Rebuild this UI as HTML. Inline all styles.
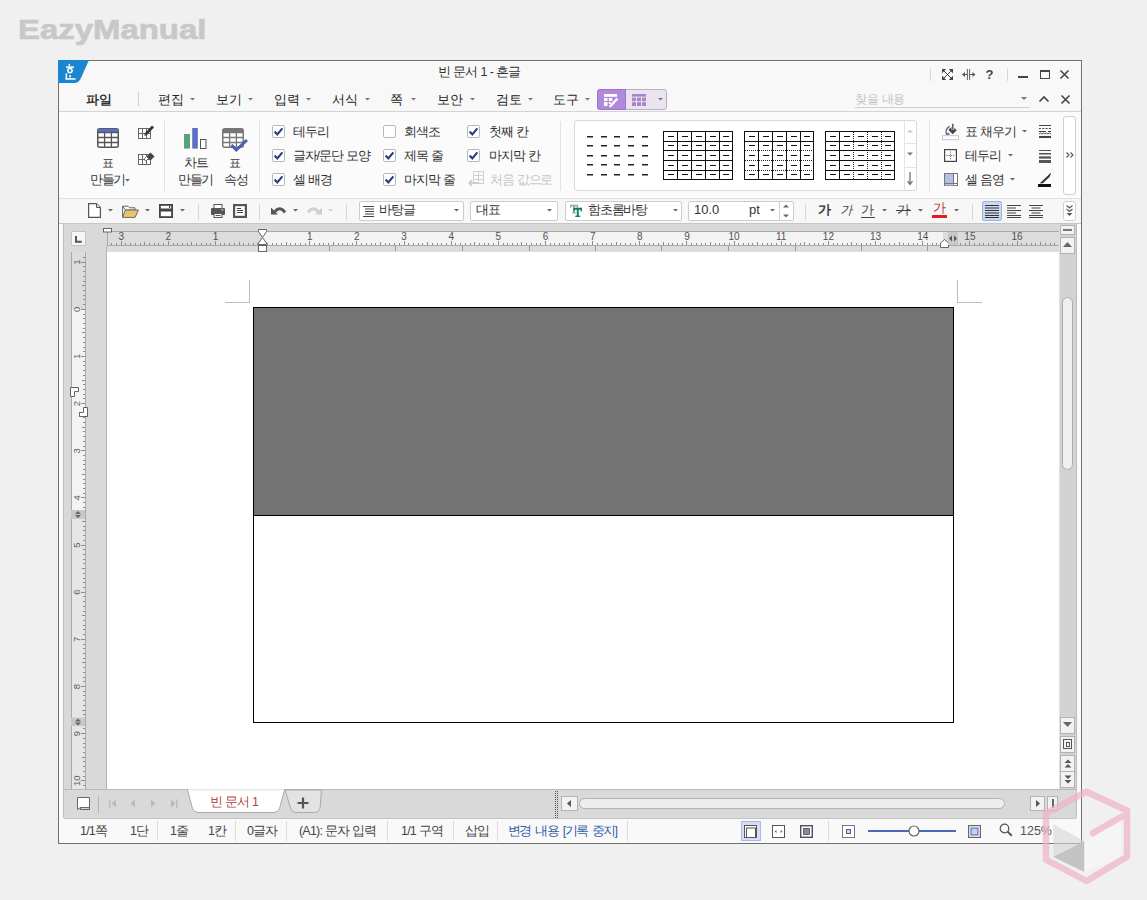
<!DOCTYPE html>
<html><head><meta charset="utf-8">
<style>
*{margin:0;padding:0;box-sizing:border-box}
html,body{width:1147px;height:900px;overflow:hidden;background:#f0f0f0;font-family:"Liberation Sans",sans-serif;color:#333}
.a{position:absolute}
.t{position:absolute;white-space:nowrap;font-size:12px;line-height:14px;color:#333;letter-spacing:-1.2px;word-spacing:1px}
svg{overflow:visible}
</style></head><body>

<div class="t" style="left:18px;top:14px;font-size:28px;line-height:32px;font-weight:bold;color:#c8c8c8;letter-spacing:0;word-spacing:0;-webkit-text-stroke:0.7px #c8c8c8;transform:scaleX(1.175);transform-origin:0 0">EazyManual</div>
<div class="a" style="left:58px;top:60px;width:1024px;height:784px;border:1px solid #707070;background:#f9f9f9"></div>
<div class="a" style="left:59px;top:61px;width:1022px;height:50px;background:#f8f8f8"></div>
<div class="a" style="left:59px;top:111px;width:1022px;height:1px;background:#d4d4d4"></div>
<div class="a" style="left:59px;top:112px;width:1022px;height:86px;background:#fbfbfb"></div>
<div class="a" style="left:59px;top:198px;width:1022px;height:1px;background:#e0e0e0"></div>
<div class="a" style="left:59px;top:199px;width:1022px;height:24px;background:#f7f7f7"></div>
<div class="a" style="left:59px;top:223px;width:1022px;height:1px;background:#c6c6c6"></div>
<svg class="a" style="left:58px;top:60px;" width="31" height="24" viewBox="0 0 31 24"><path d="M0 0H31L23 18Q21 23 16 23H0Z" fill="#1b86cf"/></svg>
<svg class="a" style="left:65px;top:63px;" width="12" height="18" viewBox="0 0 12 18"><g fill="#fff"><rect x="3.6" y="0.8" width="1.5" height="2.6"/><rect x="1" y="3.4" width="8" height="1.5"/><rect x="0.6" y="10.3" width="1.5" height="6"/><rect x="0.6" y="15.2" width="10" height="1.5"/><rect x="4.3" y="12" width="1.5" height="2.5"/></g><circle cx="5" cy="7.6" r="2.1" fill="none" stroke="#fff" stroke-width="1.5"/></svg>
<div class="t" style="left:438px;top:65px;font-size:12.5px;color:#333;letter-spacing:-1.1px;word-spacing:1px">빈 문서 1 - 흔글</div>
<div class="a" style="left:930px;top:68px;width:1px;height:13px;background:#d8d8d8"></div>
<div class="a" style="left:1007px;top:68px;width:1px;height:13px;background:#d8d8d8"></div>
<svg class="a" style="left:942px;top:69px;" width="11" height="11" viewBox="0 0 11 11"><path d="M1.5 1.5L9.5 9.5M9.5 1.5L1.5 9.5" stroke="#444" stroke-width="1"/><path d="M0 0H4.2L0 4.2Z M11 0H6.8L11 4.2Z M0 11H4.2L0 6.8Z M11 11H6.8L11 6.8Z" fill="#444"/></svg>
<svg class="a" style="left:962px;top:69px;" width="14" height="11" viewBox="0 0 14 11"><path d="M5.4 0V11M7.6 0V11" stroke="#555" stroke-width="0.9"/><path d="M1 5.5H5M8 5.5H12" stroke="#555" stroke-width="1.2"/><path d="M0 5.5L3 3V8Z M13.5 5.5L10.5 3V8Z" fill="#555"/></svg>
<div class="t" style="left:985.5px;top:68px;font-size:13px;font-weight:bold;color:#444;letter-spacing:0">?</div>
<div class="a" style="left:1018px;top:76px;width:10px;height:2px;background:#444"></div>
<div class="a" style="left:1040px;top:70px;width:10px;height:9px;border:1.5px solid #444;border-top-width:2.5px"></div>
<svg class="a" style="left:1060px;top:70px;" width="9" height="9" viewBox="0 0 9 9"><path d="M0.5 0.5L8.5 8.5M8.5 0.5L0.5 8.5" stroke="#444" stroke-width="1.6"/></svg>
<div class="t" style="left:86px;top:93px;font-size:12.5px;font-weight:bold;color:#333;letter-spacing:-0.5px">파일</div>
<div class="a" style="left:138px;top:92px;width:1px;height:14px;background:#d0d0d0"></div>
<div class="t" style="left:158px;top:93px;font-size:12.5px;color:#222;letter-spacing:-0.5px">편집</div>
<svg class="a" style="left:189.5px;top:98px;" width="5.0" height="4" viewBox="0 0 5.0 4"><path d="M0 0H5.0L2.5 2.5Z" fill="#777"/></svg>
<div class="t" style="left:216px;top:93px;font-size:12.5px;color:#222;letter-spacing:-0.5px">보기</div>
<svg class="a" style="left:247.5px;top:98px;" width="5.0" height="4" viewBox="0 0 5.0 4"><path d="M0 0H5.0L2.5 2.5Z" fill="#777"/></svg>
<div class="t" style="left:274px;top:93px;font-size:12.5px;color:#222;letter-spacing:-0.5px">입력</div>
<svg class="a" style="left:305.5px;top:98px;" width="5.0" height="4" viewBox="0 0 5.0 4"><path d="M0 0H5.0L2.5 2.5Z" fill="#777"/></svg>
<div class="t" style="left:332px;top:93px;font-size:12.5px;color:#222;letter-spacing:-0.5px">서식</div>
<svg class="a" style="left:364.5px;top:98px;" width="5.0" height="4" viewBox="0 0 5.0 4"><path d="M0 0H5.0L2.5 2.5Z" fill="#777"/></svg>
<div class="t" style="left:390px;top:93px;font-size:12.5px;color:#222;letter-spacing:-0.5px">쪽</div>
<svg class="a" style="left:410.5px;top:98px;" width="5.0" height="4" viewBox="0 0 5.0 4"><path d="M0 0H5.0L2.5 2.5Z" fill="#777"/></svg>
<div class="t" style="left:437px;top:93px;font-size:12.5px;color:#222;letter-spacing:-0.5px">보안</div>
<svg class="a" style="left:469.5px;top:98px;" width="5.0" height="4" viewBox="0 0 5.0 4"><path d="M0 0H5.0L2.5 2.5Z" fill="#777"/></svg>
<div class="t" style="left:496px;top:93px;font-size:12.5px;color:#222;letter-spacing:-0.5px">검토</div>
<svg class="a" style="left:527.5px;top:98px;" width="5.0" height="4" viewBox="0 0 5.0 4"><path d="M0 0H5.0L2.5 2.5Z" fill="#777"/></svg>
<div class="t" style="left:553px;top:93px;font-size:12.5px;color:#222;letter-spacing:-0.5px">도구</div>
<svg class="a" style="left:584.5px;top:98px;" width="5.0" height="4" viewBox="0 0 5.0 4"><path d="M0 0H5.0L2.5 2.5Z" fill="#777"/></svg>
<div class="a" style="left:597px;top:89px;width:70px;height:21px;background:#ebe4f0;border:1px solid #b9b1c2;border-radius:3px"></div>
<div class="a" style="left:597px;top:89px;width:29px;height:21px;background:#b088dc;border:1px solid #9d73cf;border-radius:3px 0 0 3px"></div>
<svg class="a" style="left:604px;top:94px;" width="14" height="13" viewBox="0 0 14 13"><g fill="#fff"><rect x="0" y="0" width="13" height="2.8"/><rect x="0" y="4" width="3.5" height="3"/><rect x="4.8" y="4" width="3.5" height="3"/><rect x="0" y="8" width="3.5" height="4"/><rect x="4.8" y="8" width="2" height="2"/></g><path d="M6 12.5L13.5 4.5" stroke="#fff" stroke-width="2.4"/><path d="M5.5 13L7 11" stroke="#fff" stroke-width="1.5"/></svg>
<svg class="a" style="left:632px;top:94px;" width="14" height="12" viewBox="0 0 14 12"><g fill="#a986c9"><rect x="0" y="0" width="14" height="2.6"/><rect x="0" y="3.6" width="4" height="3.6"/><rect x="5" y="3.6" width="4" height="3.6"/><rect x="10" y="3.6" width="4" height="3.6"/><rect x="0" y="8.2" width="4" height="3.8"/><rect x="5" y="8.2" width="4" height="3.8"/><rect x="10" y="8.2" width="4" height="3.8"/></g></svg>
<svg class="a" style="left:657.5px;top:98px;" width="5.0" height="4" viewBox="0 0 5.0 4"><path d="M0 0H5.0L2.5 2.5Z" fill="#777"/></svg>
<div class="t" style="left:855px;top:92px;font-size:12px;color:#c4c4c4;letter-spacing:-0.5px">찾을 내용</div>
<div class="a" style="left:855px;top:107px;width:175px;height:1px;background:#cfcfcf"></div>
<svg class="a" style="left:1021px;top:97px;" width="6" height="4" viewBox="0 0 6 4"><path d="M0 0H6L3 3Z" fill="#777"/></svg>
<svg class="a" style="left:1039px;top:96px;" width="10" height="6" viewBox="0 0 10 6"><path d="M0.5 5.5L5 1L9.5 5.5" stroke="#444" stroke-width="1.6" fill="none"/></svg>
<svg class="a" style="left:1061px;top:95px;" width="9" height="9" viewBox="0 0 9 9"><path d="M0.5 0.5L8.5 8.5M8.5 0.5L0.5 8.5" stroke="#444" stroke-width="1.6"/></svg>
<!--RIBBON-->
<svg class="a" style="left:97px;top:128px;" width="22" height="20" viewBox="0 0 22 20"><rect x="0.75" y="0.75" width="20.5" height="18.5" rx="2" fill="#fff" stroke="#555" stroke-width="1.5"/><path d="M0.75 3Q0.75 0.75 3 0.75H19Q21.25 0.75 21.25 3V4.5H0.75Z" fill="#5b6fc2"/><path d="M0.75 4.5H21.25M0.75 9.5H21.25M0.75 14.5H21.25M7.6 4.5V19M14.4 4.5V19" stroke="#555" stroke-width="1.3" fill="none"/></svg>
<div class="t" style="left:102px;top:156px;font-size:12px;letter-spacing:0">표</div>
<div class="t" style="left:90px;top:173px;font-size:12.5px;letter-spacing:-1.3px">만들기</div>
<svg class="a" style="left:125.0px;top:179px;" width="5.0" height="4" viewBox="0 0 5.0 4"><path d="M0 0H5.0L2.5 2.5Z" fill="#666"/></svg>
<svg class="a" style="left:138px;top:124px;" width="17" height="16" viewBox="0 0 17 16"><rect x="0.5" y="4.5" width="12" height="10" fill="#fff" stroke="#666"/><path d="M0.5 9.5H12.5M4.5 4.5V14.5M8.5 4.5V14.5" stroke="#666"/><path d="M7 11L15 2.5" stroke="#333" stroke-width="2.6"/><path d="M6.5 12L7.3 10" stroke="#999" stroke-width="1"/></svg>
<svg class="a" style="left:138px;top:150px;" width="17" height="16" viewBox="0 0 17 16"><rect x="0.5" y="4.5" width="12" height="10" fill="#fff" stroke="#666"/><path d="M0.5 9.5H12.5M4.5 4.5V14.5M8.5 4.5V14.5" stroke="#666"/><path d="M8.5 6.5L12.5 2.5L16.5 6.5L12.5 10.5Z" fill="#444"/><path d="M8.5 6.5L6.5 8.5Q6 10.5 8 11L10.5 8.5Z" fill="#fff" stroke="#555" stroke-width="0.8"/></svg>
<div class="a" style="left:164px;top:121px;width:1px;height:70px;background:#e2e2e2"></div>
<svg class="a" style="left:184px;top:128px;" width="23" height="21" viewBox="0 0 23 21"><rect x="0" y="6" width="6" height="14.6" fill="#58a27a"/><rect x="8.2" y="0" width="5.6" height="20.6" fill="#5a6fc4"/><rect x="16.5" y="11.5" width="5.5" height="9" fill="#fff" stroke="#555" stroke-width="1"/></svg>
<div class="t" style="left:184px;top:156px;font-size:12.5px;letter-spacing:-1.3px">차트</div>
<div class="t" style="left:178px;top:173px;font-size:12.5px;letter-spacing:-1.3px">만들기</div>
<svg class="a" style="left:222px;top:128px;" width="26" height="23" viewBox="0 0 26 23"><rect x="0.75" y="0.75" width="20.5" height="18.5" rx="2" fill="#fff" stroke="#777" stroke-width="1.5"/><path d="M0.75 3Q0.75 0.75 3 0.75H19Q21.25 0.75 21.25 3V4.5H0.75Z" fill="#777"/><path d="M0.75 4.5H21.25M0.75 9.5H21.25M0.75 14.5H21.25M7.6 4.5V19M14.4 4.5V19" stroke="#777" stroke-width="1.3" fill="none"/><path d="M9.5 17L14.3 22L25 12" stroke="#4a5fb5" stroke-width="3" fill="none"/></svg>
<div class="t" style="left:229px;top:156px;font-size:12px;letter-spacing:0">표</div>
<div class="t" style="left:224px;top:173px;font-size:12.5px;letter-spacing:-1.3px">속성</div>
<div class="a" style="left:259px;top:121px;width:1px;height:70px;background:#e2e2e2"></div>
<svg class="a" style="left:272px;top:125px" width="13" height="13" viewBox="0 0 13 13"><rect x="0.5" y="0.5" width="12" height="12" rx="1.5" fill="#fff" stroke="#b8b8b8"/><path d="M2.6 6.6L5.3 9.4L10.4 3.4" stroke="#2b3a7c" stroke-width="2.1" fill="none"/></svg>
<div class="t" style="left:293px;top:125px;font-size:12.5px;letter-spacing:-1.2px">테두리</div>
<svg class="a" style="left:272px;top:149px" width="13" height="13" viewBox="0 0 13 13"><rect x="0.5" y="0.5" width="12" height="12" rx="1.5" fill="#fff" stroke="#b8b8b8"/><path d="M2.6 6.6L5.3 9.4L10.4 3.4" stroke="#2b3a7c" stroke-width="2.1" fill="none"/></svg>
<div class="t" style="left:293px;top:149px;font-size:12.5px;letter-spacing:-1.2px">글자/문단 모양</div>
<svg class="a" style="left:272px;top:173px" width="13" height="13" viewBox="0 0 13 13"><rect x="0.5" y="0.5" width="12" height="12" rx="1.5" fill="#fff" stroke="#b8b8b8"/><path d="M2.6 6.6L5.3 9.4L10.4 3.4" stroke="#2b3a7c" stroke-width="2.1" fill="none"/></svg>
<div class="t" style="left:293px;top:173px;font-size:12.5px;letter-spacing:-1.2px">셀 배경</div>
<svg class="a" style="left:383px;top:125px" width="13" height="13" viewBox="0 0 13 13"><rect x="0.5" y="0.5" width="12" height="12" rx="1.5" fill="#fff" stroke="#b8b8b8"/></svg>
<div class="t" style="left:404px;top:125px;font-size:12.5px;letter-spacing:-1.2px">회색조</div>
<svg class="a" style="left:383px;top:149px" width="13" height="13" viewBox="0 0 13 13"><rect x="0.5" y="0.5" width="12" height="12" rx="1.5" fill="#fff" stroke="#b8b8b8"/><path d="M2.6 6.6L5.3 9.4L10.4 3.4" stroke="#2b3a7c" stroke-width="2.1" fill="none"/></svg>
<div class="t" style="left:404px;top:149px;font-size:12.5px;letter-spacing:-1.2px">제목 줄</div>
<svg class="a" style="left:383px;top:173px" width="13" height="13" viewBox="0 0 13 13"><rect x="0.5" y="0.5" width="12" height="12" rx="1.5" fill="#fff" stroke="#b8b8b8"/><path d="M2.6 6.6L5.3 9.4L10.4 3.4" stroke="#2b3a7c" stroke-width="2.1" fill="none"/></svg>
<div class="t" style="left:404px;top:173px;font-size:12.5px;letter-spacing:-1.2px">마지막 줄</div>
<svg class="a" style="left:467px;top:125px" width="13" height="13" viewBox="0 0 13 13"><rect x="0.5" y="0.5" width="12" height="12" rx="1.5" fill="#fff" stroke="#b8b8b8"/><path d="M2.6 6.6L5.3 9.4L10.4 3.4" stroke="#2b3a7c" stroke-width="2.1" fill="none"/></svg>
<div class="t" style="left:489px;top:125px;font-size:12.5px;letter-spacing:-1.2px">첫째 칸</div>
<svg class="a" style="left:467px;top:149px" width="13" height="13" viewBox="0 0 13 13"><rect x="0.5" y="0.5" width="12" height="12" rx="1.5" fill="#fff" stroke="#b8b8b8"/><path d="M2.6 6.6L5.3 9.4L10.4 3.4" stroke="#2b3a7c" stroke-width="2.1" fill="none"/></svg>
<div class="t" style="left:489px;top:149px;font-size:12.5px;letter-spacing:-1.2px">마지막 칸</div>
<svg class="a" style="left:469px;top:171px;" width="16" height="18" viewBox="0 0 16 18"><g stroke="#d0d0d0" fill="none" stroke-width="1"><rect x="4.5" y="0.5" width="10" height="12"/><path d="M4.5 4.5H14.5M4.5 8.5H14.5M9.5 0.5V12.5"/></g><path d="M0 12H9M0 12L3 9M0 12L3 15" stroke="#c8c8c8" stroke-width="1.6" fill="none"/></svg>
<div class="t" style="left:490px;top:173px;font-size:12.5px;letter-spacing:-1.2px;color:#c6c6c6">처음 값으로</div>
<div class="a" style="left:560px;top:121px;width:1px;height:70px;background:#e2e2e2"></div>
<div class="a" style="left:574px;top:120px;width:343px;height:71px;background:#fff;border:1px solid #d9d9d9;border-radius:3px"></div>
<div class="a" style="left:904px;top:121px;width:1px;height:69px;background:#e4e4e4"></div>
<div class="a" style="left:905px;top:143px;width:11px;height:1px;background:#e4e4e4"></div>
<div class="a" style="left:905px;top:167px;width:11px;height:1px;background:#e4e4e4"></div>
<svg class="a" style="left:907px;top:129px;" width="6" height="4" viewBox="0 0 6 4"><path d="M0 3.5L3 0.5L6 3.5Z" fill="#c8c8c8"/></svg>
<svg class="a" style="left:907px;top:152px;" width="6" height="4" viewBox="0 0 6 4"><path d="M0 0.5L3 3.5L6 0.5Z" fill="#777"/></svg>
<svg class="a" style="left:907px;top:172px;" width="6" height="14" viewBox="0 0 6 14"><path d="M3 0V12M0.5 9L3 12.5L5.5 9" stroke="#666" stroke-width="1.2" fill="none"/></svg>
<svg class="a" style="left:574px;top:120px;" width="80" height="70" viewBox="0 0 80 70"><rect x="13" y="16" width="6" height="1.5" fill="#222"/><rect x="13" y="25" width="6" height="1.5" fill="#222"/><rect x="13" y="35" width="6" height="1.5" fill="#222"/><rect x="13" y="44" width="6" height="1.5" fill="#222"/><rect x="13" y="54" width="6" height="1.5" fill="#222"/><rect x="27" y="16" width="6" height="1.5" fill="#222"/><rect x="27" y="25" width="6" height="1.5" fill="#222"/><rect x="27" y="35" width="6" height="1.5" fill="#222"/><rect x="27" y="44" width="6" height="1.5" fill="#222"/><rect x="27" y="54" width="6" height="1.5" fill="#222"/><rect x="40" y="16" width="6" height="1.5" fill="#222"/><rect x="40" y="25" width="6" height="1.5" fill="#222"/><rect x="40" y="35" width="6" height="1.5" fill="#222"/><rect x="40" y="44" width="6" height="1.5" fill="#222"/><rect x="40" y="54" width="6" height="1.5" fill="#222"/><rect x="54" y="16" width="6" height="1.5" fill="#222"/><rect x="54" y="25" width="6" height="1.5" fill="#222"/><rect x="54" y="35" width="6" height="1.5" fill="#222"/><rect x="54" y="44" width="6" height="1.5" fill="#222"/><rect x="54" y="54" width="6" height="1.5" fill="#222"/><rect x="68" y="16" width="6" height="1.5" fill="#222"/><rect x="68" y="25" width="6" height="1.5" fill="#222"/><rect x="68" y="35" width="6" height="1.5" fill="#222"/><rect x="68" y="44" width="6" height="1.5" fill="#222"/><rect x="68" y="54" width="6" height="1.5" fill="#222"/></svg>
<svg class="a" style="left:663px;top:131px;" width="70" height="49" viewBox="0 0 70 49"><g shape-rendering="crispEdges"><rect x="0.5" y="0.5" width="69" height="48" fill="#fff" stroke="#111" stroke-width="1"/><rect x="14" y="0" width="1" height="49" fill="#111"/><rect x="28" y="0" width="1" height="49" fill="#111"/><rect x="42" y="0" width="1" height="49" fill="#111"/><rect x="56" y="0" width="1" height="49" fill="#111"/><rect x="0" y="10" width="70" height="1" fill="#111"/><rect x="0" y="19" width="70" height="1" fill="#111"/><rect x="0" y="29" width="70" height="1" fill="#111"/><rect x="0" y="39" width="70" height="1" fill="#111"/><rect x="5" y="5" width="6" height="1" fill="#111"/><rect x="5" y="14" width="6" height="1" fill="#111"/><rect x="5" y="24" width="6" height="1" fill="#111"/><rect x="5" y="34" width="6" height="1" fill="#111"/><rect x="5" y="43" width="6" height="1" fill="#111"/><rect x="19" y="5" width="6" height="1" fill="#111"/><rect x="19" y="14" width="6" height="1" fill="#111"/><rect x="19" y="24" width="6" height="1" fill="#111"/><rect x="19" y="34" width="6" height="1" fill="#111"/><rect x="19" y="43" width="6" height="1" fill="#111"/><rect x="33" y="5" width="6" height="1" fill="#111"/><rect x="33" y="14" width="6" height="1" fill="#111"/><rect x="33" y="24" width="6" height="1" fill="#111"/><rect x="33" y="34" width="6" height="1" fill="#111"/><rect x="33" y="43" width="6" height="1" fill="#111"/><rect x="47" y="5" width="6" height="1" fill="#111"/><rect x="47" y="14" width="6" height="1" fill="#111"/><rect x="47" y="24" width="6" height="1" fill="#111"/><rect x="47" y="34" width="6" height="1" fill="#111"/><rect x="47" y="43" width="6" height="1" fill="#111"/><rect x="60" y="5" width="6" height="1" fill="#111"/><rect x="60" y="14" width="6" height="1" fill="#111"/><rect x="60" y="24" width="6" height="1" fill="#111"/><rect x="60" y="34" width="6" height="1" fill="#111"/><rect x="60" y="43" width="6" height="1" fill="#111"/></g></svg>
<svg class="a" style="left:744px;top:131px;" width="70" height="49" viewBox="0 0 70 49"><g shape-rendering="crispEdges"><rect x="0.5" y="0.5" width="69" height="48" fill="#fff" stroke="#111" stroke-width="1"/><rect x="14" y="0" width="1" height="49" fill="#111"/><rect x="28" y="0" width="1" height="49" fill="#111"/><rect x="42" y="0" width="1" height="49" fill="#111"/><rect x="56" y="0" width="1" height="49" fill="#111"/><rect x="0" y="10" width="70" height="1" fill="#111"/><rect x="1" y="19" width="1" height="1" fill="#222"/><rect x="3" y="19" width="1" height="1" fill="#222"/><rect x="5" y="19" width="1" height="1" fill="#222"/><rect x="7" y="19" width="1" height="1" fill="#222"/><rect x="9" y="19" width="1" height="1" fill="#222"/><rect x="11" y="19" width="1" height="1" fill="#222"/><rect x="13" y="19" width="1" height="1" fill="#222"/><rect x="15" y="19" width="1" height="1" fill="#222"/><rect x="17" y="19" width="1" height="1" fill="#222"/><rect x="19" y="19" width="1" height="1" fill="#222"/><rect x="21" y="19" width="1" height="1" fill="#222"/><rect x="23" y="19" width="1" height="1" fill="#222"/><rect x="25" y="19" width="1" height="1" fill="#222"/><rect x="27" y="19" width="1" height="1" fill="#222"/><rect x="29" y="19" width="1" height="1" fill="#222"/><rect x="31" y="19" width="1" height="1" fill="#222"/><rect x="33" y="19" width="1" height="1" fill="#222"/><rect x="35" y="19" width="1" height="1" fill="#222"/><rect x="37" y="19" width="1" height="1" fill="#222"/><rect x="39" y="19" width="1" height="1" fill="#222"/><rect x="41" y="19" width="1" height="1" fill="#222"/><rect x="43" y="19" width="1" height="1" fill="#222"/><rect x="45" y="19" width="1" height="1" fill="#222"/><rect x="47" y="19" width="1" height="1" fill="#222"/><rect x="49" y="19" width="1" height="1" fill="#222"/><rect x="51" y="19" width="1" height="1" fill="#222"/><rect x="53" y="19" width="1" height="1" fill="#222"/><rect x="55" y="19" width="1" height="1" fill="#222"/><rect x="57" y="19" width="1" height="1" fill="#222"/><rect x="59" y="19" width="1" height="1" fill="#222"/><rect x="61" y="19" width="1" height="1" fill="#222"/><rect x="63" y="19" width="1" height="1" fill="#222"/><rect x="65" y="19" width="1" height="1" fill="#222"/><rect x="67" y="19" width="1" height="1" fill="#222"/><rect x="1" y="29" width="1" height="1" fill="#222"/><rect x="3" y="29" width="1" height="1" fill="#222"/><rect x="5" y="29" width="1" height="1" fill="#222"/><rect x="7" y="29" width="1" height="1" fill="#222"/><rect x="9" y="29" width="1" height="1" fill="#222"/><rect x="11" y="29" width="1" height="1" fill="#222"/><rect x="13" y="29" width="1" height="1" fill="#222"/><rect x="15" y="29" width="1" height="1" fill="#222"/><rect x="17" y="29" width="1" height="1" fill="#222"/><rect x="19" y="29" width="1" height="1" fill="#222"/><rect x="21" y="29" width="1" height="1" fill="#222"/><rect x="23" y="29" width="1" height="1" fill="#222"/><rect x="25" y="29" width="1" height="1" fill="#222"/><rect x="27" y="29" width="1" height="1" fill="#222"/><rect x="29" y="29" width="1" height="1" fill="#222"/><rect x="31" y="29" width="1" height="1" fill="#222"/><rect x="33" y="29" width="1" height="1" fill="#222"/><rect x="35" y="29" width="1" height="1" fill="#222"/><rect x="37" y="29" width="1" height="1" fill="#222"/><rect x="39" y="29" width="1" height="1" fill="#222"/><rect x="41" y="29" width="1" height="1" fill="#222"/><rect x="43" y="29" width="1" height="1" fill="#222"/><rect x="45" y="29" width="1" height="1" fill="#222"/><rect x="47" y="29" width="1" height="1" fill="#222"/><rect x="49" y="29" width="1" height="1" fill="#222"/><rect x="51" y="29" width="1" height="1" fill="#222"/><rect x="53" y="29" width="1" height="1" fill="#222"/><rect x="55" y="29" width="1" height="1" fill="#222"/><rect x="57" y="29" width="1" height="1" fill="#222"/><rect x="59" y="29" width="1" height="1" fill="#222"/><rect x="61" y="29" width="1" height="1" fill="#222"/><rect x="63" y="29" width="1" height="1" fill="#222"/><rect x="65" y="29" width="1" height="1" fill="#222"/><rect x="67" y="29" width="1" height="1" fill="#222"/><rect x="1" y="39" width="1" height="1" fill="#222"/><rect x="3" y="39" width="1" height="1" fill="#222"/><rect x="5" y="39" width="1" height="1" fill="#222"/><rect x="7" y="39" width="1" height="1" fill="#222"/><rect x="9" y="39" width="1" height="1" fill="#222"/><rect x="11" y="39" width="1" height="1" fill="#222"/><rect x="13" y="39" width="1" height="1" fill="#222"/><rect x="15" y="39" width="1" height="1" fill="#222"/><rect x="17" y="39" width="1" height="1" fill="#222"/><rect x="19" y="39" width="1" height="1" fill="#222"/><rect x="21" y="39" width="1" height="1" fill="#222"/><rect x="23" y="39" width="1" height="1" fill="#222"/><rect x="25" y="39" width="1" height="1" fill="#222"/><rect x="27" y="39" width="1" height="1" fill="#222"/><rect x="29" y="39" width="1" height="1" fill="#222"/><rect x="31" y="39" width="1" height="1" fill="#222"/><rect x="33" y="39" width="1" height="1" fill="#222"/><rect x="35" y="39" width="1" height="1" fill="#222"/><rect x="37" y="39" width="1" height="1" fill="#222"/><rect x="39" y="39" width="1" height="1" fill="#222"/><rect x="41" y="39" width="1" height="1" fill="#222"/><rect x="43" y="39" width="1" height="1" fill="#222"/><rect x="45" y="39" width="1" height="1" fill="#222"/><rect x="47" y="39" width="1" height="1" fill="#222"/><rect x="49" y="39" width="1" height="1" fill="#222"/><rect x="51" y="39" width="1" height="1" fill="#222"/><rect x="53" y="39" width="1" height="1" fill="#222"/><rect x="55" y="39" width="1" height="1" fill="#222"/><rect x="57" y="39" width="1" height="1" fill="#222"/><rect x="59" y="39" width="1" height="1" fill="#222"/><rect x="61" y="39" width="1" height="1" fill="#222"/><rect x="63" y="39" width="1" height="1" fill="#222"/><rect x="65" y="39" width="1" height="1" fill="#222"/><rect x="67" y="39" width="1" height="1" fill="#222"/><rect x="5" y="5" width="6" height="1" fill="#111"/><rect x="5" y="14" width="6" height="1" fill="#111"/><rect x="5" y="24" width="6" height="1" fill="#111"/><rect x="5" y="34" width="6" height="1" fill="#111"/><rect x="5" y="43" width="6" height="1" fill="#111"/><rect x="19" y="5" width="6" height="1" fill="#111"/><rect x="19" y="14" width="6" height="1" fill="#111"/><rect x="19" y="24" width="6" height="1" fill="#111"/><rect x="19" y="34" width="6" height="1" fill="#111"/><rect x="19" y="43" width="6" height="1" fill="#111"/><rect x="33" y="5" width="6" height="1" fill="#111"/><rect x="33" y="14" width="6" height="1" fill="#111"/><rect x="33" y="24" width="6" height="1" fill="#111"/><rect x="33" y="34" width="6" height="1" fill="#111"/><rect x="33" y="43" width="6" height="1" fill="#111"/><rect x="47" y="5" width="6" height="1" fill="#111"/><rect x="47" y="14" width="6" height="1" fill="#111"/><rect x="47" y="24" width="6" height="1" fill="#111"/><rect x="47" y="34" width="6" height="1" fill="#111"/><rect x="47" y="43" width="6" height="1" fill="#111"/><rect x="60" y="5" width="6" height="1" fill="#111"/><rect x="60" y="14" width="6" height="1" fill="#111"/><rect x="60" y="24" width="6" height="1" fill="#111"/><rect x="60" y="34" width="6" height="1" fill="#111"/><rect x="60" y="43" width="6" height="1" fill="#111"/></g></svg>
<svg class="a" style="left:825px;top:131px;" width="70" height="49" viewBox="0 0 70 49"><g shape-rendering="crispEdges"><rect x="0.5" y="0.5" width="69" height="48" fill="#fff" stroke="#111" stroke-width="1"/><rect x="14" y="0" width="1" height="49" fill="#111"/><rect x="28" y="1" width="1" height="1" fill="#222"/><rect x="28" y="3" width="1" height="1" fill="#222"/><rect x="28" y="5" width="1" height="1" fill="#222"/><rect x="28" y="7" width="1" height="1" fill="#222"/><rect x="28" y="9" width="1" height="1" fill="#222"/><rect x="28" y="11" width="1" height="1" fill="#222"/><rect x="28" y="13" width="1" height="1" fill="#222"/><rect x="28" y="15" width="1" height="1" fill="#222"/><rect x="28" y="17" width="1" height="1" fill="#222"/><rect x="28" y="19" width="1" height="1" fill="#222"/><rect x="28" y="21" width="1" height="1" fill="#222"/><rect x="28" y="23" width="1" height="1" fill="#222"/><rect x="28" y="25" width="1" height="1" fill="#222"/><rect x="28" y="27" width="1" height="1" fill="#222"/><rect x="28" y="29" width="1" height="1" fill="#222"/><rect x="28" y="31" width="1" height="1" fill="#222"/><rect x="28" y="33" width="1" height="1" fill="#222"/><rect x="28" y="35" width="1" height="1" fill="#222"/><rect x="28" y="37" width="1" height="1" fill="#222"/><rect x="28" y="39" width="1" height="1" fill="#222"/><rect x="28" y="41" width="1" height="1" fill="#222"/><rect x="28" y="43" width="1" height="1" fill="#222"/><rect x="28" y="45" width="1" height="1" fill="#222"/><rect x="28" y="47" width="1" height="1" fill="#222"/><rect x="42" y="1" width="1" height="1" fill="#222"/><rect x="42" y="3" width="1" height="1" fill="#222"/><rect x="42" y="5" width="1" height="1" fill="#222"/><rect x="42" y="7" width="1" height="1" fill="#222"/><rect x="42" y="9" width="1" height="1" fill="#222"/><rect x="42" y="11" width="1" height="1" fill="#222"/><rect x="42" y="13" width="1" height="1" fill="#222"/><rect x="42" y="15" width="1" height="1" fill="#222"/><rect x="42" y="17" width="1" height="1" fill="#222"/><rect x="42" y="19" width="1" height="1" fill="#222"/><rect x="42" y="21" width="1" height="1" fill="#222"/><rect x="42" y="23" width="1" height="1" fill="#222"/><rect x="42" y="25" width="1" height="1" fill="#222"/><rect x="42" y="27" width="1" height="1" fill="#222"/><rect x="42" y="29" width="1" height="1" fill="#222"/><rect x="42" y="31" width="1" height="1" fill="#222"/><rect x="42" y="33" width="1" height="1" fill="#222"/><rect x="42" y="35" width="1" height="1" fill="#222"/><rect x="42" y="37" width="1" height="1" fill="#222"/><rect x="42" y="39" width="1" height="1" fill="#222"/><rect x="42" y="41" width="1" height="1" fill="#222"/><rect x="42" y="43" width="1" height="1" fill="#222"/><rect x="42" y="45" width="1" height="1" fill="#222"/><rect x="42" y="47" width="1" height="1" fill="#222"/><rect x="56" y="1" width="1" height="1" fill="#222"/><rect x="56" y="3" width="1" height="1" fill="#222"/><rect x="56" y="5" width="1" height="1" fill="#222"/><rect x="56" y="7" width="1" height="1" fill="#222"/><rect x="56" y="9" width="1" height="1" fill="#222"/><rect x="56" y="11" width="1" height="1" fill="#222"/><rect x="56" y="13" width="1" height="1" fill="#222"/><rect x="56" y="15" width="1" height="1" fill="#222"/><rect x="56" y="17" width="1" height="1" fill="#222"/><rect x="56" y="19" width="1" height="1" fill="#222"/><rect x="56" y="21" width="1" height="1" fill="#222"/><rect x="56" y="23" width="1" height="1" fill="#222"/><rect x="56" y="25" width="1" height="1" fill="#222"/><rect x="56" y="27" width="1" height="1" fill="#222"/><rect x="56" y="29" width="1" height="1" fill="#222"/><rect x="56" y="31" width="1" height="1" fill="#222"/><rect x="56" y="33" width="1" height="1" fill="#222"/><rect x="56" y="35" width="1" height="1" fill="#222"/><rect x="56" y="37" width="1" height="1" fill="#222"/><rect x="56" y="39" width="1" height="1" fill="#222"/><rect x="56" y="41" width="1" height="1" fill="#222"/><rect x="56" y="43" width="1" height="1" fill="#222"/><rect x="56" y="45" width="1" height="1" fill="#222"/><rect x="56" y="47" width="1" height="1" fill="#222"/><rect x="0" y="10" width="70" height="1" fill="#111"/><rect x="0" y="19" width="70" height="1" fill="#111"/><rect x="0" y="29" width="70" height="1" fill="#111"/><rect x="0" y="39" width="70" height="1" fill="#111"/><rect x="5" y="5" width="6" height="1" fill="#111"/><rect x="5" y="14" width="6" height="1" fill="#111"/><rect x="5" y="24" width="6" height="1" fill="#111"/><rect x="5" y="34" width="6" height="1" fill="#111"/><rect x="5" y="43" width="6" height="1" fill="#111"/><rect x="19" y="5" width="6" height="1" fill="#111"/><rect x="19" y="14" width="6" height="1" fill="#111"/><rect x="19" y="24" width="6" height="1" fill="#111"/><rect x="19" y="34" width="6" height="1" fill="#111"/><rect x="19" y="43" width="6" height="1" fill="#111"/><rect x="33" y="5" width="6" height="1" fill="#111"/><rect x="33" y="14" width="6" height="1" fill="#111"/><rect x="33" y="24" width="6" height="1" fill="#111"/><rect x="33" y="34" width="6" height="1" fill="#111"/><rect x="33" y="43" width="6" height="1" fill="#111"/><rect x="47" y="5" width="6" height="1" fill="#111"/><rect x="47" y="14" width="6" height="1" fill="#111"/><rect x="47" y="24" width="6" height="1" fill="#111"/><rect x="47" y="34" width="6" height="1" fill="#111"/><rect x="47" y="43" width="6" height="1" fill="#111"/><rect x="60" y="5" width="6" height="1" fill="#111"/><rect x="60" y="14" width="6" height="1" fill="#111"/><rect x="60" y="24" width="6" height="1" fill="#111"/><rect x="60" y="34" width="6" height="1" fill="#111"/><rect x="60" y="43" width="6" height="1" fill="#111"/></g></svg>
<div class="a" style="left:929px;top:121px;width:1px;height:70px;background:#e2e2e2"></div>
<svg class="a" style="left:941px;top:123px;" width="19" height="18" viewBox="0 0 19 18"><path d="M5.3 10.8Q4.2 5.5 8.6 3.3" stroke="#666" stroke-width="1.3" fill="none"/><path d="M7.3 6.8L11.2 3.6L15.8 7.3L11.7 11.2Z" fill="#444"/><path d="M11.8 0.8V6.8" stroke="#fff" stroke-width="2.6"/><path d="M11.8 0.8V6.5" stroke="#444" stroke-width="1.3"/><ellipse cx="6.6" cy="10.9" rx="2.1" ry="1.2" fill="#6b78bd"/><rect x="1.5" y="12.7" width="16" height="4" fill="#fff" stroke="#c6c6c6"/></svg>
<div class="t" style="left:965px;top:125px;font-size:12.5px;letter-spacing:-1.2px">표 채우기</div>
<svg class="a" style="left:1021.5px;top:130px;" width="5.0" height="4" viewBox="0 0 5.0 4"><path d="M0 0H5.0L2.5 2.5Z" fill="#666"/></svg>
<svg class="a" style="left:944px;top:149px;" width="13" height="13" viewBox="0 0 13 13"><rect x="0.6" y="0.6" width="11.8" height="11.8" fill="#fff" stroke="#444" stroke-width="1.2"/><path d="M6.5 2.5V11M2.5 6.5H11" stroke="#555" stroke-dasharray="1 1.2"/></svg>
<div class="t" style="left:965px;top:149px;font-size:12.5px;letter-spacing:-1.2px">테두리</div>
<svg class="a" style="left:1007.5px;top:154px;" width="5.0" height="4" viewBox="0 0 5.0 4"><path d="M0 0H5.0L2.5 2.5Z" fill="#666"/></svg>
<svg class="a" style="left:944px;top:173px;" width="14" height="13" viewBox="0 0 14 13"><rect x="0.5" y="0.5" width="13" height="12" fill="#fff" stroke="#777"/><rect x="1" y="1" width="8.5" height="9.5" fill="#b3bfe6"/><path d="M9.5 0.5V12.5M0.5 10.5H13.5" stroke="#777"/><rect x="1" y="11" width="8.5" height="1.5" fill="#b3bfe6"/></svg>
<div class="t" style="left:965px;top:173px;font-size:12.5px;letter-spacing:-1.2px">셀 음영</div>
<svg class="a" style="left:1010.0px;top:178px;" width="5.0" height="4" viewBox="0 0 5.0 4"><path d="M0 0H5.0L2.5 2.5Z" fill="#666"/></svg>
<svg class="a" style="left:1039px;top:124px;" width="13" height="14" viewBox="0 0 13 14"><g stroke="#444" fill="none"><path d="M0 1.5H12" stroke-width="1"/><path d="M0 4.5H12" stroke-width="1" stroke-dasharray="2 1.3"/><path d="M0 7.5H7M9 7.5H12" stroke-width="1"/><path d="M0 10L1.5 9L3 10L4.5 9L6 10L7.5 9L9 10L10.5 9L12 10" stroke-width="0.9"/><path d="M0 13H12" stroke-width="2"/></g></svg>
<svg class="a" style="left:1039px;top:149px;" width="13" height="14" viewBox="0 0 13 14"><g stroke="#555" fill="none"><path d="M0 1.5H12" stroke-width="1"/><path d="M0 4.75H12" stroke-width="1.5"/><path d="M0 8.5H12" stroke-width="2.2"/><path d="M0 12.5H12" stroke-width="3"/></g></svg>
<svg class="a" style="left:1038px;top:172px;" width="14" height="16" viewBox="0 0 14 16"><path d="M2 11L9.5 4L12.5 1L13 1.5L11.5 5L4.5 11.5Z" fill="#333"/><path d="M1.5 11.5L3 10L4 11Z" fill="#666"/><rect x="0" y="12" width="13" height="3" fill="#111"/></svg>
<div class="a" style="left:1063px;top:116px;width:13px;height:79px;border:1px solid #cfcfcf;border-radius:3px;background:#fff"></div>
<svg class="a" style="left:1066px;top:152px;" width="8" height="6" viewBox="0 0 8 6"><path d="M0.5 0.5L3 3L0.5 5.5M4.5 0.5L7 3L4.5 5.5" stroke="#555" stroke-width="1.1" fill="none"/></svg>
<!--TOOLBAR-->
<svg class="a" style="left:88px;top:203px;" width="13" height="15" viewBox="0 0 13 15"><path d="M0.6 0.6H8.5L12.4 4.5V14.4H0.6Z" fill="#fff" stroke="#555" stroke-width="1.2"/><path d="M8.5 0.6V4.5H12.4" fill="#ddd" stroke="#555" stroke-width="1"/></svg>
<svg class="a" style="left:107.5px;top:209px;" width="5.0" height="4" viewBox="0 0 5.0 4"><path d="M0 0H5.0L2.5 2.5Z" fill="#666"/></svg>
<svg class="a" style="left:122px;top:205px;" width="17" height="13" viewBox="0 0 17 13"><path d="M0.6 1.2H6L7.5 2.8H13V5H3.5Z" fill="#fff" stroke="#666" stroke-width="1"/><path d="M0.6 1.2V12.4H13L16.4 5H3.5L0.6 12" fill="#e8c76b" stroke="#666" stroke-width="1"/></svg>
<svg class="a" style="left:144.5px;top:209px;" width="5.0" height="4" viewBox="0 0 5.0 4"><path d="M0 0H5.0L2.5 2.5Z" fill="#666"/></svg>
<svg class="a" style="left:159px;top:204px;" width="14" height="14" viewBox="0 0 14 14"><rect x="0.9" y="0.9" width="12.2" height="12.2" fill="#fff" stroke="#444" stroke-width="1.8"/><rect x="1" y="4.5" width="12" height="3" fill="#444"/><rect x="10" y="1.5" width="1.2" height="2.5" fill="#444"/></svg>
<svg class="a" style="left:179.5px;top:209px;" width="5.0" height="4" viewBox="0 0 5.0 4"><path d="M0 0H5.0L2.5 2.5Z" fill="#666"/></svg>
<div class="a" style="left:198px;top:204px;width:1px;height:16px;background:#d6d6d6"></div>
<svg class="a" style="left:211px;top:204px;" width="14" height="14" viewBox="0 0 14 14"><rect x="3" y="0.5" width="8" height="4" fill="#fff" stroke="#555"/><rect x="0" y="4" width="14" height="7" rx="1" fill="#555"/><rect x="10" y="5.3" width="2.5" height="1" fill="#ccc"/><rect x="3" y="9.5" width="8" height="4" fill="#fff" stroke="#555"/><rect x="4.5" y="11" width="5" height="1" fill="#555"/></svg>
<svg class="a" style="left:233px;top:204px;" width="14" height="14" viewBox="0 0 14 14"><rect x="1.1" y="1.1" width="11.8" height="11.8" fill="#fff" stroke="#555" stroke-width="2.2"/><path d="M3.8 4.5H8M3.8 6.5H10M3.8 8.5H10" stroke="#444" stroke-width="1"/></svg>
<div class="a" style="left:259px;top:204px;width:1px;height:16px;background:#d6d6d6"></div>
<svg class="a" style="left:271px;top:206px;" width="15" height="10" viewBox="0 0 15 10"><path d="M4 5.5Q9 -0.5 14 6.5" stroke="#555" stroke-width="3" fill="none"/><path d="M0 1.5V8.5H7Z" fill="#555"/></svg>
<svg class="a" style="left:292.5px;top:209px;" width="5.0" height="4" viewBox="0 0 5.0 4"><path d="M0 0H5.0L2.5 2.5Z" fill="#666"/></svg>
<svg class="a" style="left:307px;top:206px;" width="15" height="10" viewBox="0 0 15 10"><path d="M11 5.5Q6 -0.5 1 6.5" stroke="#cfcfcf" stroke-width="3" fill="none"/><path d="M15 1.5V8.5H8Z" fill="#cfcfcf"/></svg>
<svg class="a" style="left:327.5px;top:209px;" width="5.0" height="4" viewBox="0 0 5.0 4"><path d="M0 0H5.0L2.5 2.5Z" fill="#ccc"/></svg>
<div class="a" style="left:346px;top:204px;width:1px;height:16px;background:#d6d6d6"></div>
<div class="a" style="left:359px;top:201px;width:105px;height:20px;background:#fff;border:1px solid #cdcdcd;border-radius:2px"></div>
<svg class="a" style="left:363px;top:206px;" width="12" height="12" viewBox="0 0 12 12"><path d="M0 0.5H11M2 3H11M2 5.5H11M2 8H11M0 10.5H11" stroke="#444" stroke-width="1"/></svg>
<div class="t" style="left:379px;top:203px;font-size:13px;letter-spacing:-1.2px">바탕글</div>
<svg class="a" style="left:453.5px;top:209px;" width="5.0" height="4" viewBox="0 0 5.0 4"><path d="M0 0H5.0L2.5 2.5Z" fill="#666"/></svg>
<div class="a" style="left:470px;top:201px;width:88px;height:20px;background:#fff;border:1px solid #cdcdcd;border-radius:2px"></div>
<div class="t" style="left:476px;top:203px;font-size:13px;letter-spacing:-1.2px">대표</div>
<svg class="a" style="left:546.5px;top:209px;" width="5.0" height="4" viewBox="0 0 5.0 4"><path d="M0 0H5.0L2.5 2.5Z" fill="#666"/></svg>
<div class="a" style="left:565px;top:201px;width:117px;height:20px;background:#fff;border:1px solid #cdcdcd;border-radius:2px"></div>
<svg class="a" style="left:569px;top:204px;" width="14" height="14" viewBox="0 0 14 14"><g fill="#93aea6"><rect x="1" y="0.8" width="8" height="1.6"/><rect x="1" y="0.8" width="1.2" height="3"/><rect x="7.8" y="0.8" width="1.2" height="3"/><rect x="4.2" y="0.8" width="1.6" height="8.5"/><rect x="2.8" y="8.3" width="4.4" height="1.1"/></g><g fill="#16785e"><rect x="4.5" y="3.8" width="8.4" height="1.9"/><rect x="4.5" y="3.8" width="1.4" height="3.6"/><rect x="11.5" y="3.8" width="1.4" height="3.6"/><rect x="7.8" y="3.8" width="1.9" height="9"/><rect x="6.2" y="11.6" width="5.1" height="1.3"/></g></svg>
<div class="t" style="left:588px;top:203px;font-size:13px;letter-spacing:-1.2px">함초롬바탕</div>
<svg class="a" style="left:672.5px;top:209px;" width="5.0" height="4" viewBox="0 0 5.0 4"><path d="M0 0H5.0L2.5 2.5Z" fill="#666"/></svg>
<div class="a" style="left:688px;top:201px;width:106px;height:20px;background:#fff;border:1px solid #cdcdcd;border-radius:2px"></div>
<div class="a" style="left:779px;top:201px;width:1px;height:20px;background:#d0d0d0"></div>
<div class="t" style="left:694px;top:203px;font-size:13px;letter-spacing:0;color:#333">10.0</div>
<div class="t" style="left:749px;top:203px;font-size:13px;letter-spacing:0;color:#333">pt</div>
<svg class="a" style="left:769.5px;top:209px;" width="5.0" height="4" viewBox="0 0 5.0 4"><path d="M0 0H5.0L2.5 2.5Z" fill="#666"/></svg>
<svg class="a" style="left:783px;top:204px;" width="6" height="4" viewBox="0 0 6 4"><path d="M0 3.5L3 0.5L6 3.5Z" fill="#666"/></svg>
<svg class="a" style="left:783px;top:214px;" width="6" height="4" viewBox="0 0 6 4"><path d="M0 0.5L3 3.5L6 0.5Z" fill="#666"/></svg>
<div class="a" style="left:805px;top:204px;width:1px;height:16px;background:#d6d6d6"></div>
<div class="t" style="left:818px;top:203px;font-size:12.5px;font-weight:bold;letter-spacing:0;color:#333">가</div>
<div class="t" style="left:840px;top:203px;font-size:12.5px;font-style:italic;letter-spacing:0;color:#444">가</div>
<div class="t" style="left:861px;top:203px;font-size:12.5px;letter-spacing:0;color:#444">가</div>
<div class="a" style="left:861px;top:217px;width:14px;height:1px;background:#444"></div>
<svg class="a" style="left:881.5px;top:209px;" width="5.0" height="4" viewBox="0 0 5.0 4"><path d="M0 0H5.0L2.5 2.5Z" fill="#666"/></svg>
<div class="t" style="left:897px;top:203px;font-size:12.5px;letter-spacing:0;color:#444">가</div>
<div class="a" style="left:896px;top:210px;width:15px;height:1px;background:#444"></div>
<svg class="a" style="left:917.5px;top:209px;" width="5.0" height="4" viewBox="0 0 5.0 4"><path d="M0 0H5.0L2.5 2.5Z" fill="#666"/></svg>
<div class="t" style="left:933px;top:201px;font-size:12.5px;letter-spacing:0;color:#b03030">가</div>
<div class="a" style="left:932px;top:215px;width:15px;height:3px;background:#e21c1c"></div>
<svg class="a" style="left:953.5px;top:209px;" width="5.0" height="4" viewBox="0 0 5.0 4"><path d="M0 0H5.0L2.5 2.5Z" fill="#666"/></svg>
<div class="a" style="left:972px;top:204px;width:1px;height:16px;background:#d6d6d6"></div>
<div class="a" style="left:982px;top:201px;width:20px;height:20px;background:#cdd7f0;border:1px solid #9fb1dc;border-radius:2px"></div>
<svg class="a" style="left:985px;top:205px;" width="14" height="13" viewBox="0 0 14 13"><path d="M0 0.5H14M0 3H14M0 5.5H14M0 8H14M0 10.5H14M0 12.5H14" stroke="#333" stroke-width="1"/></svg>
<svg class="a" style="left:1007px;top:205px;" width="14" height="13" viewBox="0 0 14 13"><path d="M0 0.5H14M0 3H9M0 5.5H14M0 8H9M0 10.5H14M0 12.5H14" stroke="#444" stroke-width="1"/></svg>
<svg class="a" style="left:1029px;top:205px;" width="14" height="13" viewBox="0 0 14 13"><path d="M0 0.5H14M2.5 3H11.5M0 5.5H14M2.5 8H11.5M0 10.5H14M0 12.5H14" stroke="#444" stroke-width="1"/></svg>
<div class="a" style="left:1063px;top:201px;width:13px;height:20px;border:1px solid #cfcfcf;border-radius:3px;background:#fff"></div>
<svg class="a" style="left:1066px;top:205px;" width="7" height="11" viewBox="0 0 7 11"><path d="M0.5 0.5L3.5 3L6.5 0.5M0.5 4L3.5 6.5L6.5 4" stroke="#555" stroke-width="1.1" fill="none"/><path d="M0.5 8H6.5L3.5 11Z" fill="#555"/></svg>
<!--DOC-->
<div class="a" style="left:59px;top:224px;width:4px;height:594px;background:#fbfbfb"></div>
<div class="a" style="left:63px;top:224px;width:1px;height:594px;background:#bdbdbd"></div>
<div class="a" style="left:1077px;top:224px;width:4px;height:594px;background:#fbfbfb"></div>
<div class="a" style="left:1076px;top:224px;width:1px;height:594px;background:#bdbdbd"></div>
<div class="a" style="left:64px;top:224px;width:1012px;height:566px;background:#d9d9d9"></div>
<div class="a" style="left:107px;top:252px;width:953px;height:538px;background:#fff"></div>
<div class="a" style="left:106px;top:246px;width:1px;height:544px;background:#b4b4b4"></div>
<div class="a" style="left:71px;top:231px;width:15px;height:15px;background:#f6f6f6;border:1px solid #c4c4c4"></div>
<svg class="a" style="left:75px;top:236px;" width="7" height="7" viewBox="0 0 7 7"><path d="M1 0V5.8H6.8" stroke="#555" stroke-width="2" fill="none"/></svg>
<svg class="a" style="left:107px;top:230px;" width="952" height="22" viewBox="0 0 952 22"><g shape-rendering="crispEdges"><rect x="0" y="1" width="952" height="21" fill="#dcdcdc"/><rect x="156" y="2" width="680" height="13" fill="#f3f3f3"/><rect x="0" y="1" width="952" height="1" fill="#a9a9a9"/><rect x="0" y="1" width="1" height="15" fill="#a9a9a9"/><rect x="4" y="13" width="1" height="2" fill="#8c8c8c"/><rect x="9" y="13" width="1" height="2" fill="#8c8c8c"/><rect x="14" y="11" width="1" height="4" fill="#8c8c8c"/><rect x="18" y="13" width="1" height="2" fill="#8c8c8c"/><rect x="23" y="13" width="1" height="2" fill="#8c8c8c"/><rect x="28" y="13" width="1" height="2" fill="#8c8c8c"/><rect x="33" y="13" width="1" height="2" fill="#8c8c8c"/><rect x="37" y="12" width="1" height="3" fill="#8c8c8c"/><rect x="42" y="13" width="1" height="2" fill="#8c8c8c"/><rect x="47" y="13" width="1" height="2" fill="#8c8c8c"/><rect x="51" y="13" width="1" height="2" fill="#8c8c8c"/><rect x="56" y="13" width="1" height="2" fill="#8c8c8c"/><rect x="61" y="11" width="1" height="4" fill="#8c8c8c"/><rect x="66" y="13" width="1" height="2" fill="#8c8c8c"/><rect x="70" y="13" width="1" height="2" fill="#8c8c8c"/><rect x="75" y="13" width="1" height="2" fill="#8c8c8c"/><rect x="80" y="13" width="1" height="2" fill="#8c8c8c"/><rect x="84" y="12" width="1" height="3" fill="#8c8c8c"/><rect x="89" y="13" width="1" height="2" fill="#8c8c8c"/><rect x="94" y="13" width="1" height="2" fill="#8c8c8c"/><rect x="99" y="13" width="1" height="2" fill="#8c8c8c"/><rect x="103" y="13" width="1" height="2" fill="#8c8c8c"/><rect x="108" y="11" width="1" height="4" fill="#8c8c8c"/><rect x="113" y="13" width="1" height="2" fill="#8c8c8c"/><rect x="117" y="13" width="1" height="2" fill="#8c8c8c"/><rect x="122" y="13" width="1" height="2" fill="#8c8c8c"/><rect x="127" y="13" width="1" height="2" fill="#8c8c8c"/><rect x="132" y="12" width="1" height="3" fill="#8c8c8c"/><rect x="136" y="13" width="1" height="2" fill="#8c8c8c"/><rect x="141" y="13" width="1" height="2" fill="#8c8c8c"/><rect x="146" y="13" width="1" height="2" fill="#8c8c8c"/><rect x="150" y="13" width="1" height="2" fill="#8c8c8c"/><rect x="155" y="11" width="1" height="4" fill="#8c8c8c"/><rect x="160" y="13" width="1" height="2" fill="#8c8c8c"/><rect x="165" y="13" width="1" height="2" fill="#8c8c8c"/><rect x="169" y="13" width="1" height="2" fill="#8c8c8c"/><rect x="174" y="13" width="1" height="2" fill="#8c8c8c"/><rect x="179" y="12" width="1" height="3" fill="#8c8c8c"/><rect x="183" y="13" width="1" height="2" fill="#8c8c8c"/><rect x="188" y="13" width="1" height="2" fill="#8c8c8c"/><rect x="193" y="13" width="1" height="2" fill="#8c8c8c"/><rect x="198" y="13" width="1" height="2" fill="#8c8c8c"/><rect x="202" y="11" width="1" height="4" fill="#8c8c8c"/><rect x="207" y="13" width="1" height="2" fill="#8c8c8c"/><rect x="212" y="13" width="1" height="2" fill="#8c8c8c"/><rect x="216" y="13" width="1" height="2" fill="#8c8c8c"/><rect x="221" y="13" width="1" height="2" fill="#8c8c8c"/><rect x="226" y="12" width="1" height="3" fill="#8c8c8c"/><rect x="231" y="13" width="1" height="2" fill="#8c8c8c"/><rect x="235" y="13" width="1" height="2" fill="#8c8c8c"/><rect x="240" y="13" width="1" height="2" fill="#8c8c8c"/><rect x="245" y="13" width="1" height="2" fill="#8c8c8c"/><rect x="249" y="11" width="1" height="4" fill="#8c8c8c"/><rect x="254" y="13" width="1" height="2" fill="#8c8c8c"/><rect x="259" y="13" width="1" height="2" fill="#8c8c8c"/><rect x="264" y="13" width="1" height="2" fill="#8c8c8c"/><rect x="268" y="13" width="1" height="2" fill="#8c8c8c"/><rect x="273" y="12" width="1" height="3" fill="#8c8c8c"/><rect x="278" y="13" width="1" height="2" fill="#8c8c8c"/><rect x="282" y="13" width="1" height="2" fill="#8c8c8c"/><rect x="287" y="13" width="1" height="2" fill="#8c8c8c"/><rect x="292" y="13" width="1" height="2" fill="#8c8c8c"/><rect x="297" y="11" width="1" height="4" fill="#8c8c8c"/><rect x="301" y="13" width="1" height="2" fill="#8c8c8c"/><rect x="306" y="13" width="1" height="2" fill="#8c8c8c"/><rect x="311" y="13" width="1" height="2" fill="#8c8c8c"/><rect x="315" y="13" width="1" height="2" fill="#8c8c8c"/><rect x="320" y="12" width="1" height="3" fill="#8c8c8c"/><rect x="325" y="13" width="1" height="2" fill="#8c8c8c"/><rect x="330" y="13" width="1" height="2" fill="#8c8c8c"/><rect x="334" y="13" width="1" height="2" fill="#8c8c8c"/><rect x="339" y="13" width="1" height="2" fill="#8c8c8c"/><rect x="344" y="11" width="1" height="4" fill="#8c8c8c"/><rect x="348" y="13" width="1" height="2" fill="#8c8c8c"/><rect x="353" y="13" width="1" height="2" fill="#8c8c8c"/><rect x="358" y="13" width="1" height="2" fill="#8c8c8c"/><rect x="363" y="13" width="1" height="2" fill="#8c8c8c"/><rect x="367" y="12" width="1" height="3" fill="#8c8c8c"/><rect x="372" y="13" width="1" height="2" fill="#8c8c8c"/><rect x="377" y="13" width="1" height="2" fill="#8c8c8c"/><rect x="381" y="13" width="1" height="2" fill="#8c8c8c"/><rect x="386" y="13" width="1" height="2" fill="#8c8c8c"/><rect x="391" y="11" width="1" height="4" fill="#8c8c8c"/><rect x="396" y="13" width="1" height="2" fill="#8c8c8c"/><rect x="400" y="13" width="1" height="2" fill="#8c8c8c"/><rect x="405" y="13" width="1" height="2" fill="#8c8c8c"/><rect x="410" y="13" width="1" height="2" fill="#8c8c8c"/><rect x="414" y="12" width="1" height="3" fill="#8c8c8c"/><rect x="419" y="13" width="1" height="2" fill="#8c8c8c"/><rect x="424" y="13" width="1" height="2" fill="#8c8c8c"/><rect x="429" y="13" width="1" height="2" fill="#8c8c8c"/><rect x="433" y="13" width="1" height="2" fill="#8c8c8c"/><rect x="438" y="11" width="1" height="4" fill="#8c8c8c"/><rect x="443" y="13" width="1" height="2" fill="#8c8c8c"/><rect x="447" y="13" width="1" height="2" fill="#8c8c8c"/><rect x="452" y="13" width="1" height="2" fill="#8c8c8c"/><rect x="457" y="13" width="1" height="2" fill="#8c8c8c"/><rect x="462" y="12" width="1" height="3" fill="#8c8c8c"/><rect x="466" y="13" width="1" height="2" fill="#8c8c8c"/><rect x="471" y="13" width="1" height="2" fill="#8c8c8c"/><rect x="476" y="13" width="1" height="2" fill="#8c8c8c"/><rect x="480" y="13" width="1" height="2" fill="#8c8c8c"/><rect x="485" y="11" width="1" height="4" fill="#8c8c8c"/><rect x="490" y="13" width="1" height="2" fill="#8c8c8c"/><rect x="495" y="13" width="1" height="2" fill="#8c8c8c"/><rect x="499" y="13" width="1" height="2" fill="#8c8c8c"/><rect x="504" y="13" width="1" height="2" fill="#8c8c8c"/><rect x="509" y="12" width="1" height="3" fill="#8c8c8c"/><rect x="513" y="13" width="1" height="2" fill="#8c8c8c"/><rect x="518" y="13" width="1" height="2" fill="#8c8c8c"/><rect x="523" y="13" width="1" height="2" fill="#8c8c8c"/><rect x="528" y="13" width="1" height="2" fill="#8c8c8c"/><rect x="532" y="11" width="1" height="4" fill="#8c8c8c"/><rect x="537" y="13" width="1" height="2" fill="#8c8c8c"/><rect x="542" y="13" width="1" height="2" fill="#8c8c8c"/><rect x="546" y="13" width="1" height="2" fill="#8c8c8c"/><rect x="551" y="13" width="1" height="2" fill="#8c8c8c"/><rect x="556" y="12" width="1" height="3" fill="#8c8c8c"/><rect x="561" y="13" width="1" height="2" fill="#8c8c8c"/><rect x="565" y="13" width="1" height="2" fill="#8c8c8c"/><rect x="570" y="13" width="1" height="2" fill="#8c8c8c"/><rect x="575" y="13" width="1" height="2" fill="#8c8c8c"/><rect x="579" y="11" width="1" height="4" fill="#8c8c8c"/><rect x="584" y="13" width="1" height="2" fill="#8c8c8c"/><rect x="589" y="13" width="1" height="2" fill="#8c8c8c"/><rect x="594" y="13" width="1" height="2" fill="#8c8c8c"/><rect x="598" y="13" width="1" height="2" fill="#8c8c8c"/><rect x="603" y="12" width="1" height="3" fill="#8c8c8c"/><rect x="608" y="13" width="1" height="2" fill="#8c8c8c"/><rect x="612" y="13" width="1" height="2" fill="#8c8c8c"/><rect x="617" y="13" width="1" height="2" fill="#8c8c8c"/><rect x="622" y="13" width="1" height="2" fill="#8c8c8c"/><rect x="627" y="11" width="1" height="4" fill="#8c8c8c"/><rect x="631" y="13" width="1" height="2" fill="#8c8c8c"/><rect x="636" y="13" width="1" height="2" fill="#8c8c8c"/><rect x="641" y="13" width="1" height="2" fill="#8c8c8c"/><rect x="645" y="13" width="1" height="2" fill="#8c8c8c"/><rect x="650" y="12" width="1" height="3" fill="#8c8c8c"/><rect x="655" y="13" width="1" height="2" fill="#8c8c8c"/><rect x="660" y="13" width="1" height="2" fill="#8c8c8c"/><rect x="664" y="13" width="1" height="2" fill="#8c8c8c"/><rect x="669" y="13" width="1" height="2" fill="#8c8c8c"/><rect x="674" y="11" width="1" height="4" fill="#8c8c8c"/><rect x="678" y="13" width="1" height="2" fill="#8c8c8c"/><rect x="683" y="13" width="1" height="2" fill="#8c8c8c"/><rect x="688" y="13" width="1" height="2" fill="#8c8c8c"/><rect x="693" y="13" width="1" height="2" fill="#8c8c8c"/><rect x="697" y="12" width="1" height="3" fill="#8c8c8c"/><rect x="702" y="13" width="1" height="2" fill="#8c8c8c"/><rect x="707" y="13" width="1" height="2" fill="#8c8c8c"/><rect x="711" y="13" width="1" height="2" fill="#8c8c8c"/><rect x="716" y="13" width="1" height="2" fill="#8c8c8c"/><rect x="721" y="11" width="1" height="4" fill="#8c8c8c"/><rect x="726" y="13" width="1" height="2" fill="#8c8c8c"/><rect x="730" y="13" width="1" height="2" fill="#8c8c8c"/><rect x="735" y="13" width="1" height="2" fill="#8c8c8c"/><rect x="740" y="13" width="1" height="2" fill="#8c8c8c"/><rect x="744" y="12" width="1" height="3" fill="#8c8c8c"/><rect x="749" y="13" width="1" height="2" fill="#8c8c8c"/><rect x="754" y="13" width="1" height="2" fill="#8c8c8c"/><rect x="759" y="13" width="1" height="2" fill="#8c8c8c"/><rect x="763" y="13" width="1" height="2" fill="#8c8c8c"/><rect x="768" y="11" width="1" height="4" fill="#8c8c8c"/><rect x="773" y="13" width="1" height="2" fill="#8c8c8c"/><rect x="777" y="13" width="1" height="2" fill="#8c8c8c"/><rect x="782" y="13" width="1" height="2" fill="#8c8c8c"/><rect x="787" y="13" width="1" height="2" fill="#8c8c8c"/><rect x="792" y="12" width="1" height="3" fill="#8c8c8c"/><rect x="796" y="13" width="1" height="2" fill="#8c8c8c"/><rect x="801" y="13" width="1" height="2" fill="#8c8c8c"/><rect x="806" y="13" width="1" height="2" fill="#8c8c8c"/><rect x="810" y="13" width="1" height="2" fill="#8c8c8c"/><rect x="815" y="11" width="1" height="4" fill="#8c8c8c"/><rect x="820" y="13" width="1" height="2" fill="#8c8c8c"/><rect x="825" y="13" width="1" height="2" fill="#8c8c8c"/><rect x="829" y="13" width="1" height="2" fill="#8c8c8c"/><rect x="834" y="13" width="1" height="2" fill="#8c8c8c"/><rect x="839" y="12" width="1" height="3" fill="#8c8c8c"/><rect x="843" y="13" width="1" height="2" fill="#8c8c8c"/><rect x="848" y="13" width="1" height="2" fill="#8c8c8c"/><rect x="853" y="13" width="1" height="2" fill="#8c8c8c"/><rect x="858" y="13" width="1" height="2" fill="#8c8c8c"/><rect x="862" y="11" width="1" height="4" fill="#8c8c8c"/><rect x="867" y="13" width="1" height="2" fill="#8c8c8c"/><rect x="872" y="13" width="1" height="2" fill="#8c8c8c"/><rect x="876" y="13" width="1" height="2" fill="#8c8c8c"/><rect x="881" y="13" width="1" height="2" fill="#8c8c8c"/><rect x="886" y="12" width="1" height="3" fill="#8c8c8c"/><rect x="891" y="13" width="1" height="2" fill="#8c8c8c"/><rect x="895" y="13" width="1" height="2" fill="#8c8c8c"/><rect x="900" y="13" width="1" height="2" fill="#8c8c8c"/><rect x="905" y="13" width="1" height="2" fill="#8c8c8c"/><rect x="910" y="11" width="1" height="4" fill="#8c8c8c"/><rect x="914" y="13" width="1" height="2" fill="#8c8c8c"/><rect x="919" y="13" width="1" height="2" fill="#8c8c8c"/><rect x="924" y="13" width="1" height="2" fill="#8c8c8c"/><rect x="928" y="13" width="1" height="2" fill="#8c8c8c"/><rect x="933" y="12" width="1" height="3" fill="#8c8c8c"/><rect x="938" y="13" width="1" height="2" fill="#8c8c8c"/><rect x="943" y="13" width="1" height="2" fill="#8c8c8c"/><rect x="947" y="13" width="1" height="2" fill="#8c8c8c"/><rect x="0" y="15" width="952" height="1" fill="#a9a9a9"/><rect x="222" y="16" width="1" height="5" fill="#9a9a9a"/><rect x="288" y="16" width="1" height="5" fill="#9a9a9a"/><rect x="355" y="16" width="1" height="5" fill="#9a9a9a"/><rect x="422" y="16" width="1" height="5" fill="#9a9a9a"/><rect x="488" y="16" width="1" height="5" fill="#9a9a9a"/><rect x="554" y="16" width="1" height="5" fill="#9a9a9a"/><rect x="621" y="16" width="1" height="5" fill="#9a9a9a"/><rect x="688" y="16" width="1" height="5" fill="#9a9a9a"/><rect x="754" y="16" width="1" height="5" fill="#9a9a9a"/><rect x="820" y="16" width="1" height="5" fill="#9a9a9a"/></g><text x="14.2" y="9.8" font-size="10" text-anchor="middle" fill="#505050" font-family="Liberation Sans">3</text><text x="61.3" y="9.8" font-size="10" text-anchor="middle" fill="#505050" font-family="Liberation Sans">2</text><text x="108.5" y="9.8" font-size="10" text-anchor="middle" fill="#505050" font-family="Liberation Sans">1</text><text x="202.8" y="9.8" font-size="10" text-anchor="middle" fill="#505050" font-family="Liberation Sans">1</text><text x="249.9" y="9.8" font-size="10" text-anchor="middle" fill="#505050" font-family="Liberation Sans">2</text><text x="297.1" y="9.8" font-size="10" text-anchor="middle" fill="#505050" font-family="Liberation Sans">3</text><text x="344.2" y="9.8" font-size="10" text-anchor="middle" fill="#505050" font-family="Liberation Sans">4</text><text x="391.4" y="9.8" font-size="10" text-anchor="middle" fill="#505050" font-family="Liberation Sans">5</text><text x="438.5" y="9.8" font-size="10" text-anchor="middle" fill="#505050" font-family="Liberation Sans">6</text><text x="485.7" y="9.8" font-size="10" text-anchor="middle" fill="#505050" font-family="Liberation Sans">7</text><text x="532.8" y="9.8" font-size="10" text-anchor="middle" fill="#505050" font-family="Liberation Sans">8</text><text x="580.0" y="9.8" font-size="10" text-anchor="middle" fill="#505050" font-family="Liberation Sans">9</text><text x="627.1" y="9.8" font-size="10" text-anchor="middle" fill="#505050" font-family="Liberation Sans">10</text><text x="674.2" y="9.8" font-size="10" text-anchor="middle" fill="#505050" font-family="Liberation Sans">11</text><text x="721.4" y="9.8" font-size="10" text-anchor="middle" fill="#505050" font-family="Liberation Sans">12</text><text x="768.5" y="9.8" font-size="10" text-anchor="middle" fill="#505050" font-family="Liberation Sans">13</text><text x="815.7" y="9.8" font-size="10" text-anchor="middle" fill="#505050" font-family="Liberation Sans">14</text><text x="862.9" y="9.8" font-size="10" text-anchor="middle" fill="#505050" font-family="Liberation Sans">15</text><text x="910.0" y="9.8" font-size="10" text-anchor="middle" fill="#505050" font-family="Liberation Sans">16</text></svg>
<svg class="a" style="left:258px;top:229px;" width="9" height="23" viewBox="0 0 9 23"><path d="M0.5 0.5H8.5V2.5L4.5 8.5L8.5 14V15.5H0.5V14L4.5 8.5L0.5 2.5Z" fill="#fff" stroke="#666"/><rect x="0.5" y="16.5" width="8" height="6" fill="#fff" stroke="#666"/></svg>
<svg class="a" style="left:103px;top:228px;" width="9" height="5" viewBox="0 0 9 5"><rect x="0.5" y="0.5" width="8" height="3.5" fill="#fff" stroke="#666"/></svg>
<svg class="a" style="left:940px;top:239px;" width="9" height="9" viewBox="0 0 9 9"><path d="M0.5 8.5V4L4.5 0.5L8.5 4V8.5Z" fill="#fff" stroke="#666"/></svg>
<div class="a" style="left:948px;top:232px;width:10px;height:13px;background:#c8c8c8"></div>
<svg class="a" style="left:949px;top:235px;" width="8" height="7" viewBox="0 0 8 7"><path d="M0 3.5L3 0.5V6.5Z M8 3.5L5 0.5V6.5Z" fill="#555"/></svg>
<svg class="a" style="left:71px;top:252px;" width="15" height="538" viewBox="0 0 15 538"><g shape-rendering="crispEdges"><rect x="0" y="0" width="15" height="538" fill="#dcdcdc"/><rect x="1" y="57" width="13" height="201" fill="#f3f3f3"/><rect x="1" y="267" width="13" height="271" fill="#e6e6e6"/><rect x="0" y="0" width="1" height="538" fill="#a9a9a9"/><rect x="14" y="0" width="1" height="538" fill="#a9a9a9"/><rect x="12" y="5" width="2" height="1" fill="#8c8c8c"/><rect x="10" y="10" width="4" height="1" fill="#8c8c8c"/><rect x="12" y="14" width="2" height="1" fill="#8c8c8c"/><rect x="12" y="19" width="2" height="1" fill="#8c8c8c"/><rect x="12" y="24" width="2" height="1" fill="#8c8c8c"/><rect x="12" y="29" width="2" height="1" fill="#8c8c8c"/><rect x="11" y="33" width="3" height="1" fill="#8c8c8c"/><rect x="12" y="38" width="2" height="1" fill="#8c8c8c"/><rect x="12" y="43" width="2" height="1" fill="#8c8c8c"/><rect x="12" y="47" width="2" height="1" fill="#8c8c8c"/><rect x="12" y="52" width="2" height="1" fill="#8c8c8c"/><rect x="10" y="57" width="4" height="1" fill="#8c8c8c"/><rect x="12" y="62" width="2" height="1" fill="#8c8c8c"/><rect x="12" y="66" width="2" height="1" fill="#8c8c8c"/><rect x="12" y="71" width="2" height="1" fill="#8c8c8c"/><rect x="12" y="76" width="2" height="1" fill="#8c8c8c"/><rect x="11" y="80" width="3" height="1" fill="#8c8c8c"/><rect x="12" y="85" width="2" height="1" fill="#8c8c8c"/><rect x="12" y="90" width="2" height="1" fill="#8c8c8c"/><rect x="12" y="95" width="2" height="1" fill="#8c8c8c"/><rect x="12" y="99" width="2" height="1" fill="#8c8c8c"/><rect x="10" y="104" width="4" height="1" fill="#8c8c8c"/><rect x="12" y="109" width="2" height="1" fill="#8c8c8c"/><rect x="12" y="113" width="2" height="1" fill="#8c8c8c"/><rect x="12" y="118" width="2" height="1" fill="#8c8c8c"/><rect x="12" y="123" width="2" height="1" fill="#8c8c8c"/><rect x="11" y="128" width="3" height="1" fill="#8c8c8c"/><rect x="12" y="132" width="2" height="1" fill="#8c8c8c"/><rect x="12" y="137" width="2" height="1" fill="#8c8c8c"/><rect x="12" y="142" width="2" height="1" fill="#8c8c8c"/><rect x="12" y="146" width="2" height="1" fill="#8c8c8c"/><rect x="10" y="151" width="4" height="1" fill="#8c8c8c"/><rect x="12" y="156" width="2" height="1" fill="#8c8c8c"/><rect x="12" y="161" width="2" height="1" fill="#8c8c8c"/><rect x="12" y="165" width="2" height="1" fill="#8c8c8c"/><rect x="12" y="170" width="2" height="1" fill="#8c8c8c"/><rect x="11" y="175" width="3" height="1" fill="#8c8c8c"/><rect x="12" y="179" width="2" height="1" fill="#8c8c8c"/><rect x="12" y="184" width="2" height="1" fill="#8c8c8c"/><rect x="12" y="189" width="2" height="1" fill="#8c8c8c"/><rect x="12" y="194" width="2" height="1" fill="#8c8c8c"/><rect x="10" y="198" width="4" height="1" fill="#8c8c8c"/><rect x="12" y="203" width="2" height="1" fill="#8c8c8c"/><rect x="12" y="208" width="2" height="1" fill="#8c8c8c"/><rect x="12" y="212" width="2" height="1" fill="#8c8c8c"/><rect x="12" y="217" width="2" height="1" fill="#8c8c8c"/><rect x="11" y="222" width="3" height="1" fill="#8c8c8c"/><rect x="12" y="227" width="2" height="1" fill="#8c8c8c"/><rect x="12" y="231" width="2" height="1" fill="#8c8c8c"/><rect x="12" y="236" width="2" height="1" fill="#8c8c8c"/><rect x="12" y="241" width="2" height="1" fill="#8c8c8c"/><rect x="10" y="245" width="4" height="1" fill="#8c8c8c"/><rect x="12" y="250" width="2" height="1" fill="#8c8c8c"/><rect x="12" y="255" width="2" height="1" fill="#8c8c8c"/><rect x="12" y="260" width="2" height="1" fill="#8c8c8c"/><rect x="12" y="264" width="2" height="1" fill="#8c8c8c"/><rect x="11" y="269" width="3" height="1" fill="#8c8c8c"/><rect x="12" y="274" width="2" height="1" fill="#8c8c8c"/><rect x="12" y="278" width="2" height="1" fill="#8c8c8c"/><rect x="12" y="283" width="2" height="1" fill="#8c8c8c"/><rect x="12" y="288" width="2" height="1" fill="#8c8c8c"/><rect x="10" y="293" width="4" height="1" fill="#8c8c8c"/><rect x="12" y="297" width="2" height="1" fill="#8c8c8c"/><rect x="12" y="302" width="2" height="1" fill="#8c8c8c"/><rect x="12" y="307" width="2" height="1" fill="#8c8c8c"/><rect x="12" y="311" width="2" height="1" fill="#8c8c8c"/><rect x="11" y="316" width="3" height="1" fill="#8c8c8c"/><rect x="12" y="321" width="2" height="1" fill="#8c8c8c"/><rect x="12" y="326" width="2" height="1" fill="#8c8c8c"/><rect x="12" y="330" width="2" height="1" fill="#8c8c8c"/><rect x="12" y="335" width="2" height="1" fill="#8c8c8c"/><rect x="10" y="340" width="4" height="1" fill="#8c8c8c"/><rect x="12" y="344" width="2" height="1" fill="#8c8c8c"/><rect x="12" y="349" width="2" height="1" fill="#8c8c8c"/><rect x="12" y="354" width="2" height="1" fill="#8c8c8c"/><rect x="12" y="359" width="2" height="1" fill="#8c8c8c"/><rect x="11" y="363" width="3" height="1" fill="#8c8c8c"/><rect x="12" y="368" width="2" height="1" fill="#8c8c8c"/><rect x="12" y="373" width="2" height="1" fill="#8c8c8c"/><rect x="12" y="377" width="2" height="1" fill="#8c8c8c"/><rect x="12" y="382" width="2" height="1" fill="#8c8c8c"/><rect x="10" y="387" width="4" height="1" fill="#8c8c8c"/><rect x="12" y="392" width="2" height="1" fill="#8c8c8c"/><rect x="12" y="396" width="2" height="1" fill="#8c8c8c"/><rect x="12" y="401" width="2" height="1" fill="#8c8c8c"/><rect x="12" y="406" width="2" height="1" fill="#8c8c8c"/><rect x="11" y="410" width="3" height="1" fill="#8c8c8c"/><rect x="12" y="415" width="2" height="1" fill="#8c8c8c"/><rect x="12" y="420" width="2" height="1" fill="#8c8c8c"/><rect x="12" y="425" width="2" height="1" fill="#8c8c8c"/><rect x="12" y="429" width="2" height="1" fill="#8c8c8c"/><rect x="10" y="434" width="4" height="1" fill="#8c8c8c"/><rect x="12" y="439" width="2" height="1" fill="#8c8c8c"/><rect x="12" y="443" width="2" height="1" fill="#8c8c8c"/><rect x="12" y="448" width="2" height="1" fill="#8c8c8c"/><rect x="12" y="453" width="2" height="1" fill="#8c8c8c"/><rect x="11" y="458" width="3" height="1" fill="#8c8c8c"/><rect x="12" y="462" width="2" height="1" fill="#8c8c8c"/><rect x="12" y="467" width="2" height="1" fill="#8c8c8c"/><rect x="12" y="472" width="2" height="1" fill="#8c8c8c"/><rect x="12" y="476" width="2" height="1" fill="#8c8c8c"/><rect x="10" y="481" width="4" height="1" fill="#8c8c8c"/><rect x="12" y="486" width="2" height="1" fill="#8c8c8c"/><rect x="12" y="491" width="2" height="1" fill="#8c8c8c"/><rect x="12" y="495" width="2" height="1" fill="#8c8c8c"/><rect x="12" y="500" width="2" height="1" fill="#8c8c8c"/><rect x="11" y="505" width="3" height="1" fill="#8c8c8c"/><rect x="12" y="509" width="2" height="1" fill="#8c8c8c"/><rect x="12" y="514" width="2" height="1" fill="#8c8c8c"/><rect x="12" y="519" width="2" height="1" fill="#8c8c8c"/><rect x="12" y="524" width="2" height="1" fill="#8c8c8c"/><rect x="10" y="528" width="4" height="1" fill="#8c8c8c"/><rect x="12" y="533" width="2" height="1" fill="#8c8c8c"/></g><text transform="translate(9.4 10.2) rotate(-90)" font-size="9.5" text-anchor="middle" fill="#606060" font-family="Liberation Sans">1</text><text transform="translate(9.4 57.3) rotate(-90)" font-size="9.5" text-anchor="middle" fill="#606060" font-family="Liberation Sans">0</text><text transform="translate(9.4 104.4) rotate(-90)" font-size="9.5" text-anchor="middle" fill="#606060" font-family="Liberation Sans">1</text><text transform="translate(9.4 151.6) rotate(-90)" font-size="9.5" text-anchor="middle" fill="#606060" font-family="Liberation Sans">2</text><text transform="translate(9.4 198.8) rotate(-90)" font-size="9.5" text-anchor="middle" fill="#606060" font-family="Liberation Sans">3</text><text transform="translate(9.4 245.9) rotate(-90)" font-size="9.5" text-anchor="middle" fill="#606060" font-family="Liberation Sans">4</text><text transform="translate(9.4 293.0) rotate(-90)" font-size="9.5" text-anchor="middle" fill="#606060" font-family="Liberation Sans">5</text><text transform="translate(9.4 340.2) rotate(-90)" font-size="9.5" text-anchor="middle" fill="#606060" font-family="Liberation Sans">6</text><text transform="translate(9.4 387.4) rotate(-90)" font-size="9.5" text-anchor="middle" fill="#606060" font-family="Liberation Sans">7</text><text transform="translate(9.4 434.5) rotate(-90)" font-size="9.5" text-anchor="middle" fill="#606060" font-family="Liberation Sans">8</text><text transform="translate(9.4 481.6) rotate(-90)" font-size="9.5" text-anchor="middle" fill="#606060" font-family="Liberation Sans">9</text><text transform="translate(9.4 528.8) rotate(-90)" font-size="9.5" text-anchor="middle" fill="#606060" font-family="Liberation Sans">10</text><rect x="0" y="258" width="14" height="9" fill="#c8c8c8"/><path d="M4 262L7 259L10 262Z M4 263L7 266L10 263Z" fill="#666"/><rect x="0" y="465.5" width="14" height="8.5" fill="#c8c8c8"/><path d="M4 469.5L7 466.5L10 469.5Z M4 470.5L7 473.5L10 470.5Z" fill="#666"/></svg>
<svg class="a" style="left:70px;top:387px;" width="9" height="10" viewBox="0 0 9 10"><path d="M0.5 0.5H8.5V4.5H4.5V9.5H0.5Z" fill="#fff" stroke="#666"/></svg>
<svg class="a" style="left:79px;top:407px;" width="9" height="10" viewBox="0 0 9 10"><path d="M4.5 0.5V5.5H8.5V9.5H0.5V5.5" fill="#fff" stroke="#666"/><path d="M4.5 0.5V5.5H0.5V9.5H8.5V0.5Z" fill="#fff" stroke="#666"/></svg>
<div class="a" style="left:249px;top:280px;width:1px;height:23px;background:#bcbcbc"></div>
<div class="a" style="left:225px;top:302px;width:25px;height:1px;background:#bcbcbc"></div>
<div class="a" style="left:957px;top:280px;width:1px;height:23px;background:#bcbcbc"></div>
<div class="a" style="left:957px;top:302px;width:25px;height:1px;background:#bcbcbc"></div>
<div class="a" style="left:253px;top:307px;width:701px;height:416px;border:1px solid #000;background:#fff"></div>
<div class="a" style="left:254px;top:308px;width:699px;height:207px;background:#737373"></div>
<div class="a" style="left:254px;top:515px;width:699px;height:1px;background:#000"></div>
<div class="a" style="left:1059px;top:224px;width:17px;height:566px;background:#d3d3d3;border-left:1px solid #e2e2e2"></div>
<div class="a" style="left:1060px;top:225px;width:15px;height:10px;background:#f2f2f2;border:1px solid #b2b2b2"></div>
<div class="a" style="left:1063px;top:229px;width:9px;height:2px;background:#777"></div>
<div class="a" style="left:1060px;top:237px;width:15px;height:17px;background:#f2f2f2;border:1px solid #b2b2b2"></div>
<svg class="a" style="left:1063px;top:242px;" width="9" height="5" viewBox="0 0 9 5"><path d="M0 5L4.5 0L9 5Z" fill="#666"/></svg>
<div class="a" style="left:1062px;top:297px;width:11px;height:173px;background:#efefef;border:1px solid #aaaaaa;border-radius:6px"></div>
<div class="a" style="left:1060px;top:717px;width:15px;height:17px;background:#f2f2f2;border:1px solid #b2b2b2"></div>
<svg class="a" style="left:1063px;top:722px;" width="9" height="5" viewBox="0 0 9 5"><path d="M0 0L4.5 5L9 0Z" fill="#666"/></svg>
<div class="a" style="left:1060px;top:736px;width:15px;height:17px;background:#f2f2f2;border:1px solid #b2b2b2"></div>
<div class="a" style="left:1063px;top:739px;width:9px;height:10px;border:1.3px solid #555"></div>
<div class="a" style="left:1065.5px;top:741.5px;width:4px;height:5px;border:1px solid #555"></div>
<div class="a" style="left:1060px;top:755px;width:15px;height:17px;background:#f2f2f2;border:1px solid #b2b2b2"></div>
<svg class="a" style="left:1064px;top:759px;" width="8" height="9" viewBox="0 0 8 9"><path d="M0.5 4L4 0.5L7.5 4Z M0.5 8.5L4 5L7.5 8.5Z" fill="#555"/></svg>
<div class="a" style="left:1060px;top:771px;width:15px;height:17px;background:#f2f2f2;border:1px solid #b2b2b2"></div>
<svg class="a" style="left:1064px;top:775px;" width="8" height="9" viewBox="0 0 8 9"><path d="M0.5 0.5L4 4L7.5 0.5Z M0.5 5L4 8.5L7.5 5Z" fill="#555"/></svg>
<!--BOTTOM-->
<div class="a" style="left:64px;top:789px;width:1012px;height:30px;background:#d9d9d9;border-top:1px solid #b9b9b9;border-bottom:1px solid #c3c3c3"></div>
<svg class="a" style="left:77px;top:797px;" width="14" height="14" viewBox="0 0 14 14"><path d="M0.5 0.5H12.5V10.5H3.5L0.5 12.5Z" fill="#fff" stroke="#666" stroke-width="1"/><path d="M3.5 10.5V12.5H12.5V10.5" fill="none" stroke="#666" stroke-width="1"/></svg>
<div class="a" style="left:98px;top:796px;width:1px;height:17px;background:#b4b4b4"></div>
<svg class="a" style="left:109px;top:799px;" width="70" height="9" viewBox="0 0 70 9"><g fill="#b9b9b9"><rect x="0" y="0.5" width="1.5" height="8"/><path d="M7 0.5L2.5 4.5L7 8.5Z"/><path d="M26 0.5L21.5 4.5L26 8.5Z"/><path d="M42 0.5L46.5 4.5L42 8.5Z"/><path d="M62 0.5L66.5 4.5L62 8.5Z"/><rect x="67" y="0.5" width="1.5" height="8"/></g></svg>
<svg class="a" style="left:186px;top:789px;" width="140" height="25" viewBox="0 0 140 25"><path d="M135.5 1H99L104.5 19Q106 23.5 110 23.5H128.5Q132.5 23.5 134 19.5Z" fill="#e3e3e3" stroke="#a9a9a9"/><path d="M1.5 1H98.5L93.5 19.5Q92 23.5 88 23.5H12Q8 23.5 6.5 19.5Z" fill="#fff" stroke="#a9a9a9"/><path d="M2 1H98" stroke="#fff" stroke-width="1.5"/></svg>
<div class="t" style="left:210px;top:795px;font-size:12.5px;color:#b84444;letter-spacing:-1.6px;word-spacing:2px">빈 문서 1</div>
<svg class="a" style="left:297px;top:797px;" width="12" height="12" viewBox="0 0 12 12"><path d="M6 0.5V11.5M0.5 6H11.5" stroke="#555" stroke-width="2.2"/></svg>
<svg class="a" style="left:554px;top:790px;" width="5" height="28" viewBox="0 0 5 28"><g shape-rendering="crispEdges"><rect x="1" y="1" width="1" height="1" fill="#555"/><rect x="1" y="3" width="1" height="1" fill="#555"/><rect x="1" y="5" width="1" height="1" fill="#555"/><rect x="1" y="7" width="1" height="1" fill="#555"/><rect x="1" y="9" width="1" height="1" fill="#555"/><rect x="1" y="11" width="1" height="1" fill="#555"/><rect x="1" y="13" width="1" height="1" fill="#555"/><rect x="1" y="15" width="1" height="1" fill="#555"/><rect x="1" y="17" width="1" height="1" fill="#555"/><rect x="1" y="19" width="1" height="1" fill="#555"/><rect x="1" y="21" width="1" height="1" fill="#555"/><rect x="1" y="23" width="1" height="1" fill="#555"/><rect x="1" y="25" width="1" height="1" fill="#555"/><rect x="1" y="27" width="1" height="1" fill="#555"/><rect x="3" y="1" width="1" height="1" fill="#555"/><rect x="3" y="3" width="1" height="1" fill="#555"/><rect x="3" y="5" width="1" height="1" fill="#555"/><rect x="3" y="7" width="1" height="1" fill="#555"/><rect x="3" y="9" width="1" height="1" fill="#555"/><rect x="3" y="11" width="1" height="1" fill="#555"/><rect x="3" y="13" width="1" height="1" fill="#555"/><rect x="3" y="15" width="1" height="1" fill="#555"/><rect x="3" y="17" width="1" height="1" fill="#555"/><rect x="3" y="19" width="1" height="1" fill="#555"/><rect x="3" y="21" width="1" height="1" fill="#555"/><rect x="3" y="23" width="1" height="1" fill="#555"/><rect x="3" y="25" width="1" height="1" fill="#555"/><rect x="3" y="27" width="1" height="1" fill="#555"/></g></svg>
<div class="a" style="left:561px;top:796px;width:17px;height:15px;background:#f2f2f2;border:1px solid #b4b4b4"></div>
<svg class="a" style="left:567px;top:800px;" width="4" height="7" viewBox="0 0 4 7"><path d="M4 0L0 3.5L4 7Z" fill="#555"/></svg>
<div class="a" style="left:579px;top:798px;width:426px;height:11px;background:#ededed;border:1px solid #b2b2b2;border-radius:6px"></div>
<div class="a" style="left:1030px;top:796px;width:15px;height:15px;background:#f2f2f2;border:1px solid #b4b4b4"></div>
<svg class="a" style="left:1036px;top:800px;" width="4" height="7" viewBox="0 0 4 7"><path d="M0 0L4 3.5L0 7Z" fill="#555"/></svg>
<div class="a" style="left:1047px;top:796px;width:11px;height:15px;background:#f2f2f2;border:1px solid #b4b4b4"></div>
<div class="a" style="left:1051.5px;top:799px;width:2px;height:9px;background:#666"></div>
<div class="a" style="left:59px;top:819px;width:1022px;height:24px;background:#f9f9f9"></div>
<div class="a" style="left:157px;top:821px;width:1px;height:20px;background:#dcdcdc"></div>
<div class="a" style="left:235px;top:821px;width:1px;height:20px;background:#dcdcdc"></div>
<div class="a" style="left:286px;top:821px;width:1px;height:20px;background:#dcdcdc"></div>
<div class="a" style="left:387px;top:821px;width:1px;height:20px;background:#dcdcdc"></div>
<div class="a" style="left:453px;top:821px;width:1px;height:20px;background:#dcdcdc"></div>
<div class="a" style="left:497px;top:821px;width:1px;height:20px;background:#dcdcdc"></div>
<div class="a" style="left:627px;top:821px;width:1px;height:20px;background:#dcdcdc"></div>
<div class="a" style="left:828px;top:821px;width:1px;height:20px;background:#dcdcdc"></div>
<div class="t" style="left:80px;top:824px;font-size:12.5px;color:#444;letter-spacing:-0.8px;word-spacing:0">1/1쪽</div>
<div class="t" style="left:130px;top:824px;font-size:12.5px;color:#444;letter-spacing:-0.8px;word-spacing:0">1단</div>
<div class="t" style="left:170px;top:824px;font-size:12.5px;color:#444;letter-spacing:-0.8px;word-spacing:0">1줄</div>
<div class="t" style="left:208px;top:824px;font-size:12.5px;color:#444;letter-spacing:-0.8px;word-spacing:0">1칸</div>
<div class="t" style="left:247px;top:824px;font-size:12.5px;color:#444;letter-spacing:-0.8px;word-spacing:0">0글자</div>
<div class="t" style="left:299px;top:824px;font-size:12.5px;color:#444;letter-spacing:-0.8px;word-spacing:0">(A1): 문자 입력</div>
<div class="t" style="left:401px;top:824px;font-size:12.5px;color:#444;letter-spacing:-0.8px;word-spacing:0">1/1 구역</div>
<div class="t" style="left:465px;top:824px;font-size:12.5px;color:#444;letter-spacing:-0.8px;word-spacing:0">삽입</div>
<div class="t" style="left:508px;top:824px;font-size:12.5px;color:#2f5ea8;letter-spacing:-1.7px;word-spacing:3px">변경 내용 [기록 중지]</div>
<div class="a" style="left:741px;top:821px;width:20px;height:20px;background:#d5def2;border:1px solid #a9b9e0"></div>
<svg class="a" style="left:744px;top:825px;" width="13" height="13" viewBox="0 0 13 13"><rect x="0.5" y="0.5" width="12" height="12" fill="#fff" stroke="#555"/><rect x="2.5" y="3" width="9" height="9.5" fill="#fff" stroke="#555"/></svg>
<svg class="a" style="left:772px;top:825px;" width="13" height="13" viewBox="0 0 13 13"><rect x="0.5" y="0.5" width="12" height="12" fill="#fff" stroke="#555"/><path d="M2.5 6.5L4.5 5V8Z M10.5 6.5L8.5 5V8Z" fill="#666"/></svg>
<svg class="a" style="left:800px;top:825px;" width="13" height="13" viewBox="0 0 13 13"><rect x="0.7" y="0.7" width="11.6" height="11.6" fill="#fff" stroke="#4a4f6a" stroke-width="1.4"/><rect x="3.5" y="3.5" width="6" height="6" fill="#8a8a8a" stroke="#4a4f6a" stroke-width="0.8"/></svg>
<svg class="a" style="left:842px;top:825px;" width="13" height="13" viewBox="0 0 13 13"><rect x="0.5" y="0.5" width="12" height="12" fill="#fff" stroke="#777"/><rect x="4.5" y="4.5" width="4" height="4" fill="#d0d0f2" stroke="#5a5aa0"/></svg>
<div class="a" style="left:868px;top:830px;width:88px;height:2px;background:#4a66b6"></div>
<svg class="a" style="left:908px;top:825px;" width="12" height="12" viewBox="0 0 12 12"><circle cx="6" cy="6" r="5" fill="#fff" stroke="#666" stroke-width="1.2"/></svg>
<svg class="a" style="left:968px;top:825px;" width="13" height="13" viewBox="0 0 13 13"><rect x="0.6" y="0.6" width="11.8" height="11.8" fill="#fff" stroke="#666" stroke-width="1.2"/><rect x="3" y="3" width="7" height="7" fill="#c5d0ee" stroke="#4a5fb5"/></svg>
<svg class="a" style="left:999px;top:823px;" width="14" height="15" viewBox="0 0 14 15"><circle cx="5.5" cy="5.5" r="4.3" fill="none" stroke="#555" stroke-width="1.2"/><path d="M8.6 8.6L12.8 12.8" stroke="#555" stroke-width="2"/></svg>
<div class="t" style="left:1020px;top:824px;font-size:12.5px;color:#555;letter-spacing:0">125%</div>
<svg class="a" style="left:1036px;top:780px;" width="111" height="120" viewBox="0 0 111 120">
<path d="M17.3 44L48.4 61L17.3 77Z" fill="#d6d6d6" opacity="0.6"/>
<path d="M17.3 77L48.4 61V92Z" fill="#c3c3c3"/>
<path d="M48.4 61L85 41V77L48.4 92Z" fill="#f7f7f7" opacity="0.7"/>
<g opacity="0.7"><path d="M50.5 11.7L91 30.5V76.7L50.5 101L10 79.6V33.4Z" fill="none" stroke="#efb2c8" stroke-width="6.5" stroke-linejoin="round"/>
<path d="M57 53L86 36.5" stroke="#efb2c8" stroke-width="6.5" stroke-linecap="round"/></g>
</svg>
</body></html>
